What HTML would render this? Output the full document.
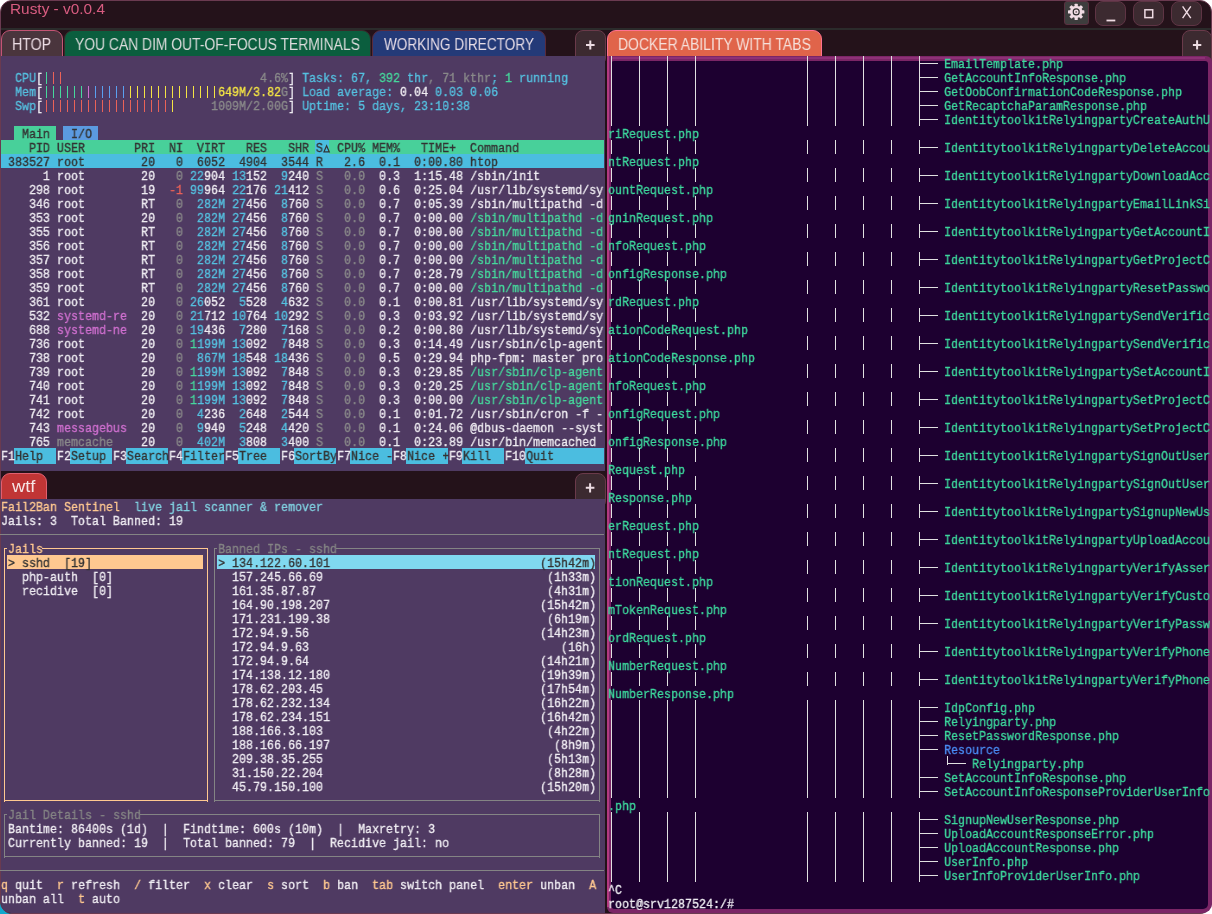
<!DOCTYPE html>
<html><head><meta charset="utf-8"><style>
html,body{margin:0;padding:0;width:1212px;height:914px;overflow:hidden;background:#ffffff;}
#win{position:absolute;left:0;top:0;width:1212px;height:914px;overflow:hidden;}
.t{position:absolute;height:14px;line-height:14px;font-family:"Liberation Mono",monospace;font-size:13.5px;white-space:pre;transform:scaleX(0.86407);-webkit-text-stroke:0.35px currentColor;will-change:transform;transform-origin:0 0;}
.ui{position:absolute;font-family:"Liberation Sans",sans-serif;white-space:pre;}
.lab{position:absolute;font-family:"Liberation Sans",sans-serif;font-size:16px;line-height:16px;white-space:pre;transform-origin:0 0;will-change:transform;}
.btn{position:absolute;box-sizing:border-box;background:#3c2a30;border:1px solid #6a3a4a;border-radius:8px;color:#eee0e6;font-family:"Liberation Sans",sans-serif;text-align:center;}
</style></head><body>
<div id="win">
<!-- desktop bits -->
<div style="position:absolute;left:0;top:880px;width:30px;height:34px;background:#10a8cc;"></div>
<!-- window frame -->
<div style="position:absolute;left:0;top:0;width:1212px;height:914px;box-sizing:border-box;background:#24121a;border:1px solid #6a3a50;border-radius:12px;"></div>
<div class="ui" style="left:9.7px;top:1px;font-size:15px;line-height:15px;color:#d85c80;transform:scaleX(1.026);transform-origin:0 0;will-change:transform;">Rusty - v0.0.4</div>
<div class="btn" style="left:1064px;top:1px;width:25px;height:24px;background:#3d3d3d;border-radius:3px;border-color:#5a3040;"></div>
<div class="btn" style="left:1095px;top:1px;width:31px;height:25px;border-color:#5e3444;"></div>
<div class="btn" style="left:1133px;top:1px;width:31px;height:25px;border-color:#5e3444;"></div>
<div class="btn" style="left:1171px;top:1px;width:31px;height:25px;border-color:#5e3444;"></div>
<div style="position:absolute;left:1px;top:28px;width:1210px;height:2px;background:#2b2b2b;"></div>
<!-- left tabs -->
<div class="btn" style="left:1px;top:30px;width:62px;height:36px;background:#4a353d;border:1.6px solid #c45474;border-radius:9px;"></div>
<div class="btn" style="left:64px;top:30px;width:307px;height:36px;background:#0b5e3e;border:1px solid #3a2a2a;border-radius:9px;"></div>
<div class="btn" style="left:372px;top:30px;width:174px;height:36px;background:#243a78;border:1px solid #5a2a3a;border-radius:9px;"></div>
<div class="btn" style="left:575px;top:30px;width:31px;height:36px;"></div>
<div class="btn" style="left:607px;top:30px;width:215px;height:36px;background:#e0644a;border:1px solid #ff7090;border-radius:9px;"></div>
<div class="btn" style="left:1182px;top:30px;width:29.5px;height:36px;"></div>
<svg style="position:absolute;left:0;top:0" width="1212" height="60" viewBox="0 0 1212 60">
 <g transform="translate(1076.2 11.9)" fill="#f0dce4">
  <circle r="6.2"/>
  <g id="tooth"><rect x="-1.6" y="-8.2" width="3.2" height="4" rx="0.6"/></g>
  <use href="#tooth" transform="rotate(45)"/><use href="#tooth" transform="rotate(90)"/><use href="#tooth" transform="rotate(135)"/>
  <use href="#tooth" transform="rotate(180)"/><use href="#tooth" transform="rotate(225)"/><use href="#tooth" transform="rotate(270)"/><use href="#tooth" transform="rotate(315)"/>
  <circle r="3" fill="none" stroke="#2a2a2a" stroke-width="1.1"/>
  <circle r="0.9" fill="#7a6a70"/>
 </g>
 <rect x="1106.5" y="19.6" width="8.8" height="1.8" fill="#f0dce4"/>
 <rect x="1144.9" y="9.8" width="7.8" height="7.8" fill="none" stroke="#f0dce4" stroke-width="1.5"/>
 <path d="M1182.6 6.3 L1190.8 18.2 M1190.8 6.3 L1182.6 18.2" stroke="#f0dce4" stroke-width="1.4" fill="none"/>
 <path d="M586 45 H594.6 M590.3 40.4 V49.6" stroke="#ecdce2" stroke-width="2" fill="none"/>
 <path d="M1192.9 44.9 H1201.3 M1197.1 40.3 V49.5" stroke="#ecdce2" stroke-width="2" fill="none"/>
</svg>
<div class="lab" style="left:11.8px;top:37px;color:#ecdce4;transform:scaleX(0.886)">HTOP</div>
<div class="lab" style="left:75.2px;top:37px;color:#dcdcdc;transform:scaleX(0.867)">YOU CAN DIM OUT-OF-FOCUS TERMINALS</div>
<div class="lab" style="left:384.4px;top:37px;color:#e6dce6;transform:scaleX(0.85)">WORKING DIRECTORY</div>
<div class="lab" style="left:618.2px;top:37px;color:#f6e0da;transform:scaleX(0.871)">DOCKER ABILITY WITH TABS</div>
<!-- htop pane -->
<div style="position:absolute;left:1px;top:56px;width:604px;height:415px;background:#4f3a62;"></div>
<!-- wtf tabs -->
<div class="btn" style="left:1px;top:473px;width:46px;height:36px;background:#c03535;border:1px solid #e06070;border-radius:9px;"></div>
<div class="btn" style="left:575px;top:473px;width:31px;height:36px;"></div>
<svg style="position:absolute;left:575px;top:473px" width="32" height="26"><path d="M10.8 14.8 H19.4 M15.1 10.2 V19.4" stroke="#ecdce2" stroke-width="2" fill="none"/></svg>
<div class="lab" style="left:11.9px;top:479px;color:#f6e6e6;transform:scaleX(1.143)">wtf</div>
<div style="position:absolute;left:1px;top:499px;width:604px;height:414px;background:#4f3a62;border-bottom-left-radius:10px;"></div>
<!-- right pane -->
<div style="position:absolute;left:607px;top:56px;width:605px;height:857px;box-sizing:border-box;background:#7b2566;border-radius:0 6px 9px 6px;"></div>
<div style="position:absolute;left:611px;top:60.5px;width:597px;height:848.5px;background:#1d0030;border-radius:3px 3px 5px 4px;"></div>
<div style="position:absolute;left:607px;top:56px;width:1.6px;height:851px;background:#c2408a;opacity:0.8;"></div>
<div style="position:absolute;left:611px;top:57px;width:594px;height:1.5px;background:#9a3a80;opacity:0.6;"></div>
<div style="position:absolute;left:45.9px;top:72.3px;width:1.4px;height:11.6px;background:#46d89c;"></div>
<div style="position:absolute;left:52.9px;top:72.3px;width:1.4px;height:11.6px;background:#ea6258;"></div>
<div style="position:absolute;left:59.9px;top:72.3px;width:1.4px;height:11.6px;background:#ea6258;"></div>
<div class="t" style="left:1px;top:72px"><span style="color:#55c0e0">  CPU</span><span style="color:#efecf2">[</span>                               <span style="color:#8a8a8a">4.6%</span><span style="color:#efecf2">]</span><span style="color:#55c0e0"> Tasks: 67, </span><span style="color:#46d89c">392</span><span style="color:#55c0e0"> thr</span><span style="color:#8a8a8a">, 71 kthr</span><span style="color:#55c0e0">; </span><span style="color:#46d89c">1</span><span style="color:#55c0e0"> running</span></div>
<div style="position:absolute;left:45.9px;top:86.3px;width:1.4px;height:11.6px;background:#46d89c;"></div>
<div style="position:absolute;left:52.9px;top:86.3px;width:1.4px;height:11.6px;background:#46d89c;"></div>
<div style="position:absolute;left:59.9px;top:86.3px;width:1.4px;height:11.6px;background:#46d89c;"></div>
<div style="position:absolute;left:66.9px;top:86.3px;width:1.4px;height:11.6px;background:#46d89c;"></div>
<div style="position:absolute;left:73.9px;top:86.3px;width:1.4px;height:11.6px;background:#46d89c;"></div>
<div style="position:absolute;left:80.9px;top:86.3px;width:1.4px;height:11.6px;background:#46d89c;"></div>
<div style="position:absolute;left:87.9px;top:86.3px;width:1.4px;height:11.6px;background:#d070d0;"></div>
<div style="position:absolute;left:94.9px;top:86.3px;width:1.4px;height:11.6px;background:#5aa0f0;"></div>
<div style="position:absolute;left:101.9px;top:86.3px;width:1.4px;height:11.6px;background:#5aa0f0;"></div>
<div style="position:absolute;left:108.9px;top:86.3px;width:1.4px;height:11.6px;background:#5aa0f0;"></div>
<div style="position:absolute;left:115.9px;top:86.3px;width:1.4px;height:11.6px;background:#5aa0f0;"></div>
<div style="position:absolute;left:122.9px;top:86.3px;width:1.4px;height:11.6px;background:#5aa0f0;"></div>
<div style="position:absolute;left:129.9px;top:86.3px;width:1.4px;height:11.6px;background:#f4e444;"></div>
<div style="position:absolute;left:136.9px;top:86.3px;width:1.4px;height:11.6px;background:#f4e444;"></div>
<div style="position:absolute;left:143.9px;top:86.3px;width:1.4px;height:11.6px;background:#f4e444;"></div>
<div style="position:absolute;left:150.9px;top:86.3px;width:1.4px;height:11.6px;background:#f4e444;"></div>
<div style="position:absolute;left:157.9px;top:86.3px;width:1.4px;height:11.6px;background:#f4e444;"></div>
<div style="position:absolute;left:164.9px;top:86.3px;width:1.4px;height:11.6px;background:#f4e444;"></div>
<div style="position:absolute;left:171.9px;top:86.3px;width:1.4px;height:11.6px;background:#f4e444;"></div>
<div style="position:absolute;left:178.9px;top:86.3px;width:1.4px;height:11.6px;background:#f4e444;"></div>
<div style="position:absolute;left:185.9px;top:86.3px;width:1.4px;height:11.6px;background:#f4e444;"></div>
<div style="position:absolute;left:192.9px;top:86.3px;width:1.4px;height:11.6px;background:#f4e444;"></div>
<div style="position:absolute;left:199.9px;top:86.3px;width:1.4px;height:11.6px;background:#f4e444;"></div>
<div style="position:absolute;left:206.9px;top:86.3px;width:1.4px;height:11.6px;background:#f4e444;"></div>
<div style="position:absolute;left:213.9px;top:86.3px;width:1.4px;height:11.6px;background:#f4e444;"></div>
<div class="t" style="left:1px;top:86px"><span style="color:#55c0e0">  Mem</span><span style="color:#efecf2">[</span>                         <span style="color:#f4e444">649M/3.82</span><span style="color:#8a8a8a">G</span><span style="color:#efecf2">]</span><span style="color:#55c0e0"> Load average: </span><span style="color:#efecf2">0.04</span><span style="color:#55c0e0"> 0.03 0.06</span></div>
<div style="position:absolute;left:45.9px;top:100.3px;width:1.4px;height:11.6px;background:#ea6258;"></div>
<div style="position:absolute;left:52.9px;top:100.3px;width:1.4px;height:11.6px;background:#ea6258;"></div>
<div style="position:absolute;left:59.9px;top:100.3px;width:1.4px;height:11.6px;background:#ea6258;"></div>
<div style="position:absolute;left:66.9px;top:100.3px;width:1.4px;height:11.6px;background:#ea6258;"></div>
<div style="position:absolute;left:73.9px;top:100.3px;width:1.4px;height:11.6px;background:#ea6258;"></div>
<div style="position:absolute;left:80.9px;top:100.3px;width:1.4px;height:11.6px;background:#ea6258;"></div>
<div style="position:absolute;left:87.9px;top:100.3px;width:1.4px;height:11.6px;background:#ea6258;"></div>
<div style="position:absolute;left:94.9px;top:100.3px;width:1.4px;height:11.6px;background:#ea6258;"></div>
<div style="position:absolute;left:101.9px;top:100.3px;width:1.4px;height:11.6px;background:#ea6258;"></div>
<div style="position:absolute;left:108.9px;top:100.3px;width:1.4px;height:11.6px;background:#ea6258;"></div>
<div style="position:absolute;left:115.9px;top:100.3px;width:1.4px;height:11.6px;background:#ea6258;"></div>
<div style="position:absolute;left:122.9px;top:100.3px;width:1.4px;height:11.6px;background:#ea6258;"></div>
<div style="position:absolute;left:129.9px;top:100.3px;width:1.4px;height:11.6px;background:#ea6258;"></div>
<div style="position:absolute;left:136.9px;top:100.3px;width:1.4px;height:11.6px;background:#ea6258;"></div>
<div style="position:absolute;left:143.9px;top:100.3px;width:1.4px;height:11.6px;background:#ea6258;"></div>
<div style="position:absolute;left:150.9px;top:100.3px;width:1.4px;height:11.6px;background:#ea6258;"></div>
<div style="position:absolute;left:157.9px;top:100.3px;width:1.4px;height:11.6px;background:#ea6258;"></div>
<div style="position:absolute;left:164.9px;top:100.3px;width:1.4px;height:11.6px;background:#ea6258;"></div>
<div style="position:absolute;left:171.9px;top:100.3px;width:1.4px;height:11.6px;background:#f4e444;"></div>
<div class="t" style="left:1px;top:100px"><span style="color:#55c0e0">  Swp</span><span style="color:#efecf2">[</span>                        <span style="color:#8a8a8a">1009M/2.00G</span><span style="color:#efecf2">]</span><span style="color:#55c0e0"> Uptime: 5 days, 23:10:38</span></div>
<div style="position:absolute;left:14.0px;top:126px;width:42.0px;height:14px;background:#48d09a;"></div>
<div style="position:absolute;left:63.0px;top:126px;width:35.0px;height:14px;background:#5b9ae0;"></div>
<div class="t" style="left:1px;top:128px"><span style="color:#333333">   Main   </span><span style="color:#333333">I/O</span></div>
<div style="position:absolute;left:1px;top:140px;width:603px;height:14px;background:#48d09a;"></div>
<div style="position:absolute;left:315.0px;top:140px;width:14.0px;height:14px;background:#4bbde0;"></div>
<div class="t" style="left:1px;top:142px"><span style="color:#333333">    PID USER       PRI  NI  VIRT   RES   SHR S</span> <span style="color:#333333"> CPU% MEM%   TIME+  Command</span></div>
<svg style="position:absolute;left:0;top:0" width="340" height="160"><path d="M323.9 151.9 L329.3 151.9 L326.6 145.7 Z" fill="none" stroke="#333" stroke-width="1.15" stroke-linejoin="miter"/></svg>
<div style="position:absolute;left:1px;top:154px;width:603px;height:14px;background:#4bbde0;"></div>
<div class="t" style="left:1px;top:156px"><span style="color:#333333"> 383527 root        20   0  6052  4904  3544 R   2.6  0.1  0:00.80 htop</span></div>
<div class="t" style="left:1px;top:170px"><span style="color:#efecf2">      1 </span><span style="color:#efecf2">root       </span><span style="color:#efecf2"> 20 </span><span style="color:#8a8a8a">  0</span> <span style="color:#55c0e0">22</span><span style="color:#efecf2">904</span> <span style="color:#55c0e0">13</span><span style="color:#efecf2">152</span>  <span style="color:#55c0e0">9</span><span style="color:#efecf2">240</span> <span style="color:#8a8a8a">S</span>   <span style="color:#8a8a8a">0.0</span> <span style="color:#efecf2"> 0.3 </span><span style="color:#efecf2"> 1:15.48 </span><span style="color:#efecf2">/sbin/init</span></div>
<div class="t" style="left:1px;top:184px"><span style="color:#efecf2">    298 </span><span style="color:#efecf2">root       </span><span style="color:#efecf2"> 19 </span><span style="color:#ea6258"> -1</span> <span style="color:#55c0e0">99</span><span style="color:#efecf2">964</span> <span style="color:#55c0e0">22</span><span style="color:#efecf2">176</span> <span style="color:#55c0e0">21</span><span style="color:#efecf2">412</span> <span style="color:#8a8a8a">S</span>   <span style="color:#8a8a8a">0.0</span> <span style="color:#efecf2"> 0.6 </span><span style="color:#efecf2"> 0:25.04 </span><span style="color:#efecf2">/usr/lib/systemd/sy</span></div>
<div class="t" style="left:1px;top:198px"><span style="color:#efecf2">    346 </span><span style="color:#efecf2">root       </span><span style="color:#efecf2"> RT </span><span style="color:#8a8a8a">  0</span>  <span style="color:#55c0e0">282M</span> <span style="color:#55c0e0">27</span><span style="color:#efecf2">456</span>  <span style="color:#55c0e0">8</span><span style="color:#efecf2">760</span> <span style="color:#8a8a8a">S</span>   <span style="color:#8a8a8a">0.0</span> <span style="color:#efecf2"> 0.7 </span><span style="color:#efecf2"> 0:05.39 </span><span style="color:#efecf2">/sbin/multipathd -d</span></div>
<div class="t" style="left:1px;top:212px"><span style="color:#efecf2">    353 </span><span style="color:#efecf2">root       </span><span style="color:#efecf2"> 20 </span><span style="color:#8a8a8a">  0</span>  <span style="color:#55c0e0">282M</span> <span style="color:#55c0e0">27</span><span style="color:#efecf2">456</span>  <span style="color:#55c0e0">8</span><span style="color:#efecf2">760</span> <span style="color:#8a8a8a">S</span>   <span style="color:#8a8a8a">0.0</span> <span style="color:#efecf2"> 0.7 </span><span style="color:#efecf2"> 0:00.00 </span><span style="color:#46d89c">/sbin/multipathd -d</span></div>
<div class="t" style="left:1px;top:226px"><span style="color:#efecf2">    355 </span><span style="color:#efecf2">root       </span><span style="color:#efecf2"> RT </span><span style="color:#8a8a8a">  0</span>  <span style="color:#55c0e0">282M</span> <span style="color:#55c0e0">27</span><span style="color:#efecf2">456</span>  <span style="color:#55c0e0">8</span><span style="color:#efecf2">760</span> <span style="color:#8a8a8a">S</span>   <span style="color:#8a8a8a">0.0</span> <span style="color:#efecf2"> 0.7 </span><span style="color:#efecf2"> 0:00.00 </span><span style="color:#46d89c">/sbin/multipathd -d</span></div>
<div class="t" style="left:1px;top:240px"><span style="color:#efecf2">    356 </span><span style="color:#efecf2">root       </span><span style="color:#efecf2"> RT </span><span style="color:#8a8a8a">  0</span>  <span style="color:#55c0e0">282M</span> <span style="color:#55c0e0">27</span><span style="color:#efecf2">456</span>  <span style="color:#55c0e0">8</span><span style="color:#efecf2">760</span> <span style="color:#8a8a8a">S</span>   <span style="color:#8a8a8a">0.0</span> <span style="color:#efecf2"> 0.7 </span><span style="color:#efecf2"> 0:00.00 </span><span style="color:#46d89c">/sbin/multipathd -d</span></div>
<div class="t" style="left:1px;top:254px"><span style="color:#efecf2">    357 </span><span style="color:#efecf2">root       </span><span style="color:#efecf2"> RT </span><span style="color:#8a8a8a">  0</span>  <span style="color:#55c0e0">282M</span> <span style="color:#55c0e0">27</span><span style="color:#efecf2">456</span>  <span style="color:#55c0e0">8</span><span style="color:#efecf2">760</span> <span style="color:#8a8a8a">S</span>   <span style="color:#8a8a8a">0.0</span> <span style="color:#efecf2"> 0.7 </span><span style="color:#efecf2"> 0:00.00 </span><span style="color:#46d89c">/sbin/multipathd -d</span></div>
<div class="t" style="left:1px;top:268px"><span style="color:#efecf2">    358 </span><span style="color:#efecf2">root       </span><span style="color:#efecf2"> RT </span><span style="color:#8a8a8a">  0</span>  <span style="color:#55c0e0">282M</span> <span style="color:#55c0e0">27</span><span style="color:#efecf2">456</span>  <span style="color:#55c0e0">8</span><span style="color:#efecf2">760</span> <span style="color:#8a8a8a">S</span>   <span style="color:#8a8a8a">0.0</span> <span style="color:#efecf2"> 0.7 </span><span style="color:#efecf2"> 0:28.79 </span><span style="color:#46d89c">/sbin/multipathd -d</span></div>
<div class="t" style="left:1px;top:282px"><span style="color:#efecf2">    359 </span><span style="color:#efecf2">root       </span><span style="color:#efecf2"> RT </span><span style="color:#8a8a8a">  0</span>  <span style="color:#55c0e0">282M</span> <span style="color:#55c0e0">27</span><span style="color:#efecf2">456</span>  <span style="color:#55c0e0">8</span><span style="color:#efecf2">760</span> <span style="color:#8a8a8a">S</span>   <span style="color:#8a8a8a">0.0</span> <span style="color:#efecf2"> 0.7 </span><span style="color:#efecf2"> 0:00.00 </span><span style="color:#46d89c">/sbin/multipathd -d</span></div>
<div class="t" style="left:1px;top:296px"><span style="color:#efecf2">    361 </span><span style="color:#efecf2">root       </span><span style="color:#efecf2"> 20 </span><span style="color:#8a8a8a">  0</span> <span style="color:#55c0e0">26</span><span style="color:#efecf2">052</span>  <span style="color:#55c0e0">5</span><span style="color:#efecf2">528</span>  <span style="color:#55c0e0">4</span><span style="color:#efecf2">632</span> <span style="color:#8a8a8a">S</span>   <span style="color:#8a8a8a">0.0</span> <span style="color:#efecf2"> 0.1 </span><span style="color:#efecf2"> 0:00.81 </span><span style="color:#efecf2">/usr/lib/systemd/sy</span></div>
<div class="t" style="left:1px;top:310px"><span style="color:#efecf2">    532 </span><span style="color:#d070d0">systemd-re </span><span style="color:#efecf2"> 20 </span><span style="color:#8a8a8a">  0</span> <span style="color:#55c0e0">21</span><span style="color:#efecf2">712</span> <span style="color:#55c0e0">10</span><span style="color:#efecf2">764</span> <span style="color:#55c0e0">10</span><span style="color:#efecf2">292</span> <span style="color:#8a8a8a">S</span>   <span style="color:#8a8a8a">0.0</span> <span style="color:#efecf2"> 0.3 </span><span style="color:#efecf2"> 0:03.92 </span><span style="color:#efecf2">/usr/lib/systemd/sy</span></div>
<div class="t" style="left:1px;top:324px"><span style="color:#efecf2">    688 </span><span style="color:#d070d0">systemd-ne </span><span style="color:#efecf2"> 20 </span><span style="color:#8a8a8a">  0</span> <span style="color:#55c0e0">19</span><span style="color:#efecf2">436</span>  <span style="color:#55c0e0">7</span><span style="color:#efecf2">280</span>  <span style="color:#55c0e0">7</span><span style="color:#efecf2">168</span> <span style="color:#8a8a8a">S</span>   <span style="color:#8a8a8a">0.0</span> <span style="color:#efecf2"> 0.2 </span><span style="color:#efecf2"> 0:00.80 </span><span style="color:#efecf2">/usr/lib/systemd/sy</span></div>
<div class="t" style="left:1px;top:338px"><span style="color:#efecf2">    736 </span><span style="color:#efecf2">root       </span><span style="color:#efecf2"> 20 </span><span style="color:#8a8a8a">  0</span> <span style="color:#46d89c">1</span><span style="color:#55c0e0">199M</span> <span style="color:#55c0e0">13</span><span style="color:#efecf2">092</span>  <span style="color:#55c0e0">7</span><span style="color:#efecf2">848</span> <span style="color:#8a8a8a">S</span>   <span style="color:#8a8a8a">0.0</span> <span style="color:#efecf2"> 0.3 </span><span style="color:#efecf2"> 0:14.49 </span><span style="color:#efecf2">/usr/sbin/clp-agent</span></div>
<div class="t" style="left:1px;top:352px"><span style="color:#efecf2">    738 </span><span style="color:#efecf2">root       </span><span style="color:#efecf2"> 20 </span><span style="color:#8a8a8a">  0</span>  <span style="color:#55c0e0">867M</span> <span style="color:#55c0e0">18</span><span style="color:#efecf2">548</span> <span style="color:#55c0e0">18</span><span style="color:#efecf2">436</span> <span style="color:#8a8a8a">S</span>   <span style="color:#8a8a8a">0.0</span> <span style="color:#efecf2"> 0.5 </span><span style="color:#efecf2"> 0:29.94 </span><span style="color:#efecf2">php-fpm: master pro</span></div>
<div class="t" style="left:1px;top:366px"><span style="color:#efecf2">    739 </span><span style="color:#efecf2">root       </span><span style="color:#efecf2"> 20 </span><span style="color:#8a8a8a">  0</span> <span style="color:#46d89c">1</span><span style="color:#55c0e0">199M</span> <span style="color:#55c0e0">13</span><span style="color:#efecf2">092</span>  <span style="color:#55c0e0">7</span><span style="color:#efecf2">848</span> <span style="color:#8a8a8a">S</span>   <span style="color:#8a8a8a">0.0</span> <span style="color:#efecf2"> 0.3 </span><span style="color:#efecf2"> 0:29.85 </span><span style="color:#46d89c">/usr/sbin/clp-agent</span></div>
<div class="t" style="left:1px;top:380px"><span style="color:#efecf2">    740 </span><span style="color:#efecf2">root       </span><span style="color:#efecf2"> 20 </span><span style="color:#8a8a8a">  0</span> <span style="color:#46d89c">1</span><span style="color:#55c0e0">199M</span> <span style="color:#55c0e0">13</span><span style="color:#efecf2">092</span>  <span style="color:#55c0e0">7</span><span style="color:#efecf2">848</span> <span style="color:#8a8a8a">S</span>   <span style="color:#8a8a8a">0.0</span> <span style="color:#efecf2"> 0.3 </span><span style="color:#efecf2"> 0:20.25 </span><span style="color:#46d89c">/usr/sbin/clp-agent</span></div>
<div class="t" style="left:1px;top:394px"><span style="color:#efecf2">    741 </span><span style="color:#efecf2">root       </span><span style="color:#efecf2"> 20 </span><span style="color:#8a8a8a">  0</span> <span style="color:#46d89c">1</span><span style="color:#55c0e0">199M</span> <span style="color:#55c0e0">13</span><span style="color:#efecf2">092</span>  <span style="color:#55c0e0">7</span><span style="color:#efecf2">848</span> <span style="color:#8a8a8a">S</span>   <span style="color:#8a8a8a">0.0</span> <span style="color:#efecf2"> 0.3 </span><span style="color:#efecf2"> 0:00.00 </span><span style="color:#46d89c">/usr/sbin/clp-agent</span></div>
<div class="t" style="left:1px;top:408px"><span style="color:#efecf2">    742 </span><span style="color:#efecf2">root       </span><span style="color:#efecf2"> 20 </span><span style="color:#8a8a8a">  0</span>  <span style="color:#55c0e0">4</span><span style="color:#efecf2">236</span>  <span style="color:#55c0e0">2</span><span style="color:#efecf2">648</span>  <span style="color:#55c0e0">2</span><span style="color:#efecf2">544</span> <span style="color:#8a8a8a">S</span>   <span style="color:#8a8a8a">0.0</span> <span style="color:#efecf2"> 0.1 </span><span style="color:#efecf2"> 0:01.72 </span><span style="color:#efecf2">/usr/sbin/cron -f -</span></div>
<div class="t" style="left:1px;top:422px"><span style="color:#efecf2">    743 </span><span style="color:#d070d0">messagebus </span><span style="color:#efecf2"> 20 </span><span style="color:#8a8a8a">  0</span>  <span style="color:#55c0e0">9</span><span style="color:#efecf2">940</span>  <span style="color:#55c0e0">5</span><span style="color:#efecf2">248</span>  <span style="color:#55c0e0">4</span><span style="color:#efecf2">420</span> <span style="color:#8a8a8a">S</span>   <span style="color:#8a8a8a">0.0</span> <span style="color:#efecf2"> 0.1 </span><span style="color:#efecf2"> 0:24.06 </span><span style="color:#efecf2">@dbus-daemon --syst</span></div>
<div class="t" style="left:1px;top:436px"><span style="color:#efecf2">    765 </span><span style="color:#8a8a8a">memcache   </span><span style="color:#efecf2"> 20 </span><span style="color:#8a8a8a">  0</span>  <span style="color:#55c0e0">402M</span>  <span style="color:#55c0e0">3</span><span style="color:#efecf2">808</span>  <span style="color:#55c0e0">3</span><span style="color:#efecf2">400</span> <span style="color:#8a8a8a">S</span>   <span style="color:#8a8a8a">0.0</span> <span style="color:#efecf2"> 0.1 </span><span style="color:#efecf2"> 0:23.89 </span><span style="color:#efecf2">/usr/bin/memcached</span></div>
<div style="position:absolute;left:14.0px;top:448px;width:42.0px;height:16px;background:#4bbde0;"></div>
<div style="position:absolute;left:70.0px;top:448px;width:42.0px;height:16px;background:#4bbde0;"></div>
<div style="position:absolute;left:126.0px;top:448px;width:42.0px;height:16px;background:#4bbde0;"></div>
<div style="position:absolute;left:182.0px;top:448px;width:42.0px;height:16px;background:#4bbde0;"></div>
<div style="position:absolute;left:238.0px;top:448px;width:42.0px;height:16px;background:#4bbde0;"></div>
<div style="position:absolute;left:294.0px;top:448px;width:42.0px;height:16px;background:#4bbde0;"></div>
<div style="position:absolute;left:350.0px;top:448px;width:42.0px;height:16px;background:#4bbde0;"></div>
<div style="position:absolute;left:406.0px;top:448px;width:42.0px;height:16px;background:#4bbde0;"></div>
<div style="position:absolute;left:462.0px;top:448px;width:42.0px;height:16px;background:#4bbde0;"></div>
<div style="position:absolute;left:525.0px;top:448px;width:79.0px;height:16px;background:#4bbde0;"></div>
<div class="t" style="left:1px;top:450px"><span style="color:#efecf2">F1</span><span style="color:#333333">Help  </span><span style="color:#efecf2">F2</span><span style="color:#333333">Setup </span><span style="color:#efecf2">F3</span><span style="color:#333333">Search</span><span style="color:#efecf2">F4</span><span style="color:#333333">Filter</span><span style="color:#efecf2">F5</span><span style="color:#333333">Tree  </span><span style="color:#efecf2">F6</span><span style="color:#333333">SortBy</span><span style="color:#efecf2">F7</span><span style="color:#333333">Nice -</span><span style="color:#efecf2">F8</span><span style="color:#333333">Nice +</span><span style="color:#efecf2">F9</span><span style="color:#333333">Kill  </span><span style="color:#efecf2">F10</span><span style="color:#333333">Quit</span></div>
<div class="t" style="left:1px;top:501px"><span style="color:#ffc890">Fail2Ban Sentinel</span><span style="color:#80d0e0">  live jail scanner &amp; remover</span></div>
<div class="t" style="left:1px;top:515px"><span style="color:#efecf2">Jails: 3  Total Banned: 19</span></div>
<div style="position:absolute;left:0.0px;top:534.1px;width:603.5px;height:1.4px;background:#848484;"></div>
<div style="position:absolute;left:3.85px;top:548.1px;width:3.15px;height:1.4px;background:#ffc890;"></div>
<div style="position:absolute;left:3.85px;top:548.1px;width:1.35px;height:6.899999999999977px;background:#ffc890;"></div>
<div style="position:absolute;left:42.0px;top:548.1px;width:162.5px;height:1.4px;background:#ffc890;"></div>
<div style="position:absolute;left:203.0px;top:548.1px;width:5.199999999999989px;height:1.4px;background:#ffc890;"></div>
<div style="position:absolute;left:206.85px;top:548.1px;width:1.35px;height:6.899999999999977px;background:#ffc890;"></div>
<div style="position:absolute;left:213.85px;top:548.1px;width:3.1500000000000057px;height:1.4px;background:#848484;"></div>
<div style="position:absolute;left:213.85px;top:548.1px;width:1.35px;height:6.899999999999977px;background:#848484;"></div>
<div style="position:absolute;left:336.0px;top:548.1px;width:260.5px;height:1.4px;background:#848484;"></div>
<div style="position:absolute;left:595.0px;top:548.1px;width:5.2000000000000455px;height:1.4px;background:#848484;"></div>
<div style="position:absolute;left:598.85px;top:548.1px;width:1.35px;height:6.899999999999977px;background:#848484;"></div>
<div class="t" style="left:1px;top:543px"> <span style="color:#ffc890">Jails</span>                         <span style="color:#848484">Banned IPs - sshd</span>                                      </div>
<div style="position:absolute;left:7.0px;top:555px;width:196.0px;height:14px;background:#ffc890;"></div>
<div style="position:absolute;left:217.0px;top:555px;width:378.0px;height:14px;background:#80d8f0;"></div>
<div style="position:absolute;left:3.85px;top:555px;width:1.35px;height:14px;background:#ffc890;"></div>
<div style="position:absolute;left:206.85px;top:555px;width:1.35px;height:14px;background:#ffc890;"></div>
<div style="position:absolute;left:213.85px;top:555px;width:1.35px;height:14px;background:#848484;"></div>
<div style="position:absolute;left:598.85px;top:555px;width:1.35px;height:14px;background:#848484;"></div>
<div class="t" style="left:1px;top:557px"> <span style="color:#333333">&gt; sshd  [19]                </span>  <span style="color:#333333">&gt; 134.122.60.101                              (15h42m)</span> </div>
<div style="position:absolute;left:3.85px;top:569px;width:1.35px;height:14px;background:#ffc890;"></div>
<div style="position:absolute;left:206.85px;top:569px;width:1.35px;height:14px;background:#ffc890;"></div>
<div style="position:absolute;left:213.85px;top:569px;width:1.35px;height:14px;background:#848484;"></div>
<div style="position:absolute;left:598.85px;top:569px;width:1.35px;height:14px;background:#848484;"></div>
<div class="t" style="left:1px;top:571px"> <span style="color:#efecf2">  php-auth  [0]             </span>  <span style="color:#efecf2">  157.245.66.69                                (1h33m)</span> </div>
<div style="position:absolute;left:3.85px;top:583px;width:1.35px;height:14px;background:#ffc890;"></div>
<div style="position:absolute;left:206.85px;top:583px;width:1.35px;height:14px;background:#ffc890;"></div>
<div style="position:absolute;left:213.85px;top:583px;width:1.35px;height:14px;background:#848484;"></div>
<div style="position:absolute;left:598.85px;top:583px;width:1.35px;height:14px;background:#848484;"></div>
<div class="t" style="left:1px;top:585px"> <span style="color:#efecf2">  recidive  [0]             </span>  <span style="color:#efecf2">  161.35.87.87                                 (4h31m)</span> </div>
<div style="position:absolute;left:3.85px;top:597px;width:1.35px;height:14px;background:#ffc890;"></div>
<div style="position:absolute;left:206.85px;top:597px;width:1.35px;height:14px;background:#ffc890;"></div>
<div style="position:absolute;left:213.85px;top:597px;width:1.35px;height:14px;background:#848484;"></div>
<div style="position:absolute;left:598.85px;top:597px;width:1.35px;height:14px;background:#848484;"></div>
<div class="t" style="left:1px;top:599px">                               <span style="color:#efecf2">  164.90.198.207                              (15h42m)</span> </div>
<div style="position:absolute;left:3.85px;top:611px;width:1.35px;height:14px;background:#ffc890;"></div>
<div style="position:absolute;left:206.85px;top:611px;width:1.35px;height:14px;background:#ffc890;"></div>
<div style="position:absolute;left:213.85px;top:611px;width:1.35px;height:14px;background:#848484;"></div>
<div style="position:absolute;left:598.85px;top:611px;width:1.35px;height:14px;background:#848484;"></div>
<div class="t" style="left:1px;top:613px">                               <span style="color:#efecf2">  171.231.199.38                               (6h19m)</span> </div>
<div style="position:absolute;left:3.85px;top:625px;width:1.35px;height:14px;background:#ffc890;"></div>
<div style="position:absolute;left:206.85px;top:625px;width:1.35px;height:14px;background:#ffc890;"></div>
<div style="position:absolute;left:213.85px;top:625px;width:1.35px;height:14px;background:#848484;"></div>
<div style="position:absolute;left:598.85px;top:625px;width:1.35px;height:14px;background:#848484;"></div>
<div class="t" style="left:1px;top:627px">                               <span style="color:#efecf2">  172.94.9.56                                 (14h23m)</span> </div>
<div style="position:absolute;left:3.85px;top:639px;width:1.35px;height:14px;background:#ffc890;"></div>
<div style="position:absolute;left:206.85px;top:639px;width:1.35px;height:14px;background:#ffc890;"></div>
<div style="position:absolute;left:213.85px;top:639px;width:1.35px;height:14px;background:#848484;"></div>
<div style="position:absolute;left:598.85px;top:639px;width:1.35px;height:14px;background:#848484;"></div>
<div class="t" style="left:1px;top:641px">                               <span style="color:#efecf2">  172.94.9.63                                    (16h)</span> </div>
<div style="position:absolute;left:3.85px;top:653px;width:1.35px;height:14px;background:#ffc890;"></div>
<div style="position:absolute;left:206.85px;top:653px;width:1.35px;height:14px;background:#ffc890;"></div>
<div style="position:absolute;left:213.85px;top:653px;width:1.35px;height:14px;background:#848484;"></div>
<div style="position:absolute;left:598.85px;top:653px;width:1.35px;height:14px;background:#848484;"></div>
<div class="t" style="left:1px;top:655px">                               <span style="color:#efecf2">  172.94.9.64                                 (14h21m)</span> </div>
<div style="position:absolute;left:3.85px;top:667px;width:1.35px;height:14px;background:#ffc890;"></div>
<div style="position:absolute;left:206.85px;top:667px;width:1.35px;height:14px;background:#ffc890;"></div>
<div style="position:absolute;left:213.85px;top:667px;width:1.35px;height:14px;background:#848484;"></div>
<div style="position:absolute;left:598.85px;top:667px;width:1.35px;height:14px;background:#848484;"></div>
<div class="t" style="left:1px;top:669px">                               <span style="color:#efecf2">  174.138.12.180                              (19h39m)</span> </div>
<div style="position:absolute;left:3.85px;top:681px;width:1.35px;height:14px;background:#ffc890;"></div>
<div style="position:absolute;left:206.85px;top:681px;width:1.35px;height:14px;background:#ffc890;"></div>
<div style="position:absolute;left:213.85px;top:681px;width:1.35px;height:14px;background:#848484;"></div>
<div style="position:absolute;left:598.85px;top:681px;width:1.35px;height:14px;background:#848484;"></div>
<div class="t" style="left:1px;top:683px">                               <span style="color:#efecf2">  178.62.203.45                               (17h54m)</span> </div>
<div style="position:absolute;left:3.85px;top:695px;width:1.35px;height:14px;background:#ffc890;"></div>
<div style="position:absolute;left:206.85px;top:695px;width:1.35px;height:14px;background:#ffc890;"></div>
<div style="position:absolute;left:213.85px;top:695px;width:1.35px;height:14px;background:#848484;"></div>
<div style="position:absolute;left:598.85px;top:695px;width:1.35px;height:14px;background:#848484;"></div>
<div class="t" style="left:1px;top:697px">                               <span style="color:#efecf2">  178.62.232.134                              (16h22m)</span> </div>
<div style="position:absolute;left:3.85px;top:709px;width:1.35px;height:14px;background:#ffc890;"></div>
<div style="position:absolute;left:206.85px;top:709px;width:1.35px;height:14px;background:#ffc890;"></div>
<div style="position:absolute;left:213.85px;top:709px;width:1.35px;height:14px;background:#848484;"></div>
<div style="position:absolute;left:598.85px;top:709px;width:1.35px;height:14px;background:#848484;"></div>
<div class="t" style="left:1px;top:711px">                               <span style="color:#efecf2">  178.62.234.151                              (16h42m)</span> </div>
<div style="position:absolute;left:3.85px;top:723px;width:1.35px;height:14px;background:#ffc890;"></div>
<div style="position:absolute;left:206.85px;top:723px;width:1.35px;height:14px;background:#ffc890;"></div>
<div style="position:absolute;left:213.85px;top:723px;width:1.35px;height:14px;background:#848484;"></div>
<div style="position:absolute;left:598.85px;top:723px;width:1.35px;height:14px;background:#848484;"></div>
<div class="t" style="left:1px;top:725px">                               <span style="color:#efecf2">  188.166.3.103                                (4h22m)</span> </div>
<div style="position:absolute;left:3.85px;top:737px;width:1.35px;height:14px;background:#ffc890;"></div>
<div style="position:absolute;left:206.85px;top:737px;width:1.35px;height:14px;background:#ffc890;"></div>
<div style="position:absolute;left:213.85px;top:737px;width:1.35px;height:14px;background:#848484;"></div>
<div style="position:absolute;left:598.85px;top:737px;width:1.35px;height:14px;background:#848484;"></div>
<div class="t" style="left:1px;top:739px">                               <span style="color:#efecf2">  188.166.66.197                                (8h9m)</span> </div>
<div style="position:absolute;left:3.85px;top:751px;width:1.35px;height:14px;background:#ffc890;"></div>
<div style="position:absolute;left:206.85px;top:751px;width:1.35px;height:14px;background:#ffc890;"></div>
<div style="position:absolute;left:213.85px;top:751px;width:1.35px;height:14px;background:#848484;"></div>
<div style="position:absolute;left:598.85px;top:751px;width:1.35px;height:14px;background:#848484;"></div>
<div class="t" style="left:1px;top:753px">                               <span style="color:#efecf2">  209.38.35.255                                (5h13m)</span> </div>
<div style="position:absolute;left:3.85px;top:765px;width:1.35px;height:14px;background:#ffc890;"></div>
<div style="position:absolute;left:206.85px;top:765px;width:1.35px;height:14px;background:#ffc890;"></div>
<div style="position:absolute;left:213.85px;top:765px;width:1.35px;height:14px;background:#848484;"></div>
<div style="position:absolute;left:598.85px;top:765px;width:1.35px;height:14px;background:#848484;"></div>
<div class="t" style="left:1px;top:767px">                               <span style="color:#efecf2">  31.150.22.204                                (8h28m)</span> </div>
<div style="position:absolute;left:3.85px;top:779px;width:1.35px;height:14px;background:#ffc890;"></div>
<div style="position:absolute;left:206.85px;top:779px;width:1.35px;height:14px;background:#ffc890;"></div>
<div style="position:absolute;left:213.85px;top:779px;width:1.35px;height:14px;background:#848484;"></div>
<div style="position:absolute;left:598.85px;top:779px;width:1.35px;height:14px;background:#848484;"></div>
<div class="t" style="left:1px;top:781px">                               <span style="color:#efecf2">  45.79.150.100                               (15h20m)</span> </div>
<div style="position:absolute;left:3.85px;top:793px;width:1.35px;height:8.5px;background:#ffc890;"></div>
<div style="position:absolute;left:5.2px;top:800.1px;width:1.7999999999999998px;height:1.4px;background:#ffc890;"></div>
<div style="position:absolute;left:7.0px;top:800.1px;width:196.0px;height:1.4px;background:#ffc890;"></div>
<div style="position:absolute;left:203.0px;top:800.1px;width:5.199999999999989px;height:1.4px;background:#ffc890;"></div>
<div style="position:absolute;left:206.85px;top:793px;width:1.35px;height:8.5px;background:#ffc890;"></div>
<div style="position:absolute;left:213.85px;top:793px;width:1.35px;height:8.5px;background:#848484;"></div>
<div style="position:absolute;left:215.2px;top:800.1px;width:1.8000000000000056px;height:1.4px;background:#848484;"></div>
<div style="position:absolute;left:217.0px;top:800.1px;width:378.0px;height:1.4px;background:#848484;"></div>
<div style="position:absolute;left:595.0px;top:800.1px;width:5.2000000000000455px;height:1.4px;background:#848484;"></div>
<div style="position:absolute;left:598.85px;top:793px;width:1.35px;height:8.5px;background:#848484;"></div>
<div style="position:absolute;left:3.85px;top:814.1px;width:3.15px;height:1.4px;background:#848484;"></div>
<div style="position:absolute;left:3.85px;top:814.1px;width:1.35px;height:6.899999999999977px;background:#848484;"></div>
<div style="position:absolute;left:140.0px;top:814.1px;width:456.5px;height:1.4px;background:#848484;"></div>
<div style="position:absolute;left:595.0px;top:814.1px;width:5.2000000000000455px;height:1.4px;background:#848484;"></div>
<div style="position:absolute;left:598.85px;top:814.1px;width:1.35px;height:6.899999999999977px;background:#848484;"></div>
<div class="t" style="left:1px;top:809px"> <span style="color:#848484">Jail Details - sshd</span>                                                                  </div>
<div style="position:absolute;left:3.85px;top:821px;width:1.35px;height:14px;background:#848484;"></div>
<div style="position:absolute;left:598.85px;top:821px;width:1.35px;height:14px;background:#848484;"></div>
<div class="t" style="left:1px;top:823px"> <span style="color:#efecf2">Bantime: 86400s (1d)  |  Findtime: 600s (10m)  |  Maxretry: 3                       </span> </div>
<div style="position:absolute;left:3.85px;top:835px;width:1.35px;height:14px;background:#848484;"></div>
<div style="position:absolute;left:598.85px;top:835px;width:1.35px;height:14px;background:#848484;"></div>
<div class="t" style="left:1px;top:837px"> <span style="color:#efecf2">Currently banned: 19  |  Total banned: 79  |  Recidive jail: no                     </span> </div>
<div style="position:absolute;left:3.85px;top:849px;width:1.35px;height:8.5px;background:#848484;"></div>
<div style="position:absolute;left:5.2px;top:856.1px;width:1.7999999999999998px;height:1.4px;background:#848484;"></div>
<div style="position:absolute;left:7.0px;top:856.1px;width:588.0px;height:1.4px;background:#848484;"></div>
<div style="position:absolute;left:595.0px;top:856.1px;width:5.2000000000000455px;height:1.4px;background:#848484;"></div>
<div style="position:absolute;left:598.85px;top:849px;width:1.35px;height:8.5px;background:#848484;"></div>
<div style="position:absolute;left:0.0px;top:870.1px;width:603.5px;height:1.4px;background:#848484;"></div>
<div class="t" style="left:1px;top:879px"><span style="color:#ffc890">q</span><span style="color:#efecf2"> quit  </span><span style="color:#ffc890">r</span><span style="color:#efecf2"> refresh  </span><span style="color:#ffc890">/</span><span style="color:#efecf2"> filter  </span><span style="color:#ffc890">x</span><span style="color:#efecf2"> clear  </span><span style="color:#ffc890">s</span><span style="color:#efecf2"> sort  </span><span style="color:#ffc890">b</span><span style="color:#efecf2"> ban  </span><span style="color:#ffc890">tab</span><span style="color:#efecf2"> switch panel  </span><span style="color:#ffc890">enter</span><span style="color:#efecf2"> unban  </span><span style="color:#ffc890">A</span></div>
<div class="t" style="left:1px;top:893px"><span style="color:#efecf2">unban all  </span><span style="color:#ffc890">t</span><span style="color:#efecf2"> auto</span></div>
<div style="position:absolute;left:610.85px;top:56px;width:1.35px;height:14px;background:#e0e0e0;"></div>
<div style="position:absolute;left:638.85px;top:56px;width:1.35px;height:14px;background:#e0e0e0;"></div>
<div style="position:absolute;left:666.85px;top:56px;width:1.35px;height:14px;background:#e0e0e0;"></div>
<div style="position:absolute;left:694.85px;top:56px;width:1.35px;height:14px;background:#e0e0e0;"></div>
<div style="position:absolute;left:806.85px;top:56px;width:1.35px;height:14px;background:#e0e0e0;"></div>
<div style="position:absolute;left:834.85px;top:56px;width:1.35px;height:14px;background:#e0e0e0;"></div>
<div style="position:absolute;left:862.85px;top:56px;width:1.35px;height:14px;background:#e0e0e0;"></div>
<div style="position:absolute;left:890.85px;top:56px;width:1.35px;height:14px;background:#e0e0e0;"></div>
<div style="position:absolute;left:918.85px;top:56px;width:1.35px;height:14px;background:#e0e0e0;"></div>
<div style="position:absolute;left:920.2px;top:63.1px;width:1.7999999999999772px;height:1.4px;background:#e0e0e0;"></div>
<div style="position:absolute;left:922.0px;top:63.1px;width:15.5px;height:1.4px;background:#e0e0e0;"></div>
<div class="t" style="left:608.3px;top:58px">                                                <span style="color:#3dd89d">EmailTemplate.php</span></div>
<div style="position:absolute;left:610.85px;top:70px;width:1.35px;height:14px;background:#e0e0e0;"></div>
<div style="position:absolute;left:638.85px;top:70px;width:1.35px;height:14px;background:#e0e0e0;"></div>
<div style="position:absolute;left:666.85px;top:70px;width:1.35px;height:14px;background:#e0e0e0;"></div>
<div style="position:absolute;left:694.85px;top:70px;width:1.35px;height:14px;background:#e0e0e0;"></div>
<div style="position:absolute;left:806.85px;top:70px;width:1.35px;height:14px;background:#e0e0e0;"></div>
<div style="position:absolute;left:834.85px;top:70px;width:1.35px;height:14px;background:#e0e0e0;"></div>
<div style="position:absolute;left:862.85px;top:70px;width:1.35px;height:14px;background:#e0e0e0;"></div>
<div style="position:absolute;left:890.85px;top:70px;width:1.35px;height:14px;background:#e0e0e0;"></div>
<div style="position:absolute;left:918.85px;top:70px;width:1.35px;height:14px;background:#e0e0e0;"></div>
<div style="position:absolute;left:920.2px;top:77.1px;width:1.7999999999999772px;height:1.4px;background:#e0e0e0;"></div>
<div style="position:absolute;left:922.0px;top:77.1px;width:15.5px;height:1.4px;background:#e0e0e0;"></div>
<div class="t" style="left:608.3px;top:72px">                                                <span style="color:#3dd89d">GetAccountInfoResponse.php</span></div>
<div style="position:absolute;left:610.85px;top:84px;width:1.35px;height:14px;background:#e0e0e0;"></div>
<div style="position:absolute;left:638.85px;top:84px;width:1.35px;height:14px;background:#e0e0e0;"></div>
<div style="position:absolute;left:666.85px;top:84px;width:1.35px;height:14px;background:#e0e0e0;"></div>
<div style="position:absolute;left:694.85px;top:84px;width:1.35px;height:14px;background:#e0e0e0;"></div>
<div style="position:absolute;left:806.85px;top:84px;width:1.35px;height:14px;background:#e0e0e0;"></div>
<div style="position:absolute;left:834.85px;top:84px;width:1.35px;height:14px;background:#e0e0e0;"></div>
<div style="position:absolute;left:862.85px;top:84px;width:1.35px;height:14px;background:#e0e0e0;"></div>
<div style="position:absolute;left:890.85px;top:84px;width:1.35px;height:14px;background:#e0e0e0;"></div>
<div style="position:absolute;left:918.85px;top:84px;width:1.35px;height:14px;background:#e0e0e0;"></div>
<div style="position:absolute;left:920.2px;top:91.1px;width:1.7999999999999772px;height:1.4px;background:#e0e0e0;"></div>
<div style="position:absolute;left:922.0px;top:91.1px;width:15.5px;height:1.4px;background:#e0e0e0;"></div>
<div class="t" style="left:608.3px;top:86px">                                                <span style="color:#3dd89d">GetOobConfirmationCodeResponse.php</span></div>
<div style="position:absolute;left:610.85px;top:98px;width:1.35px;height:14px;background:#e0e0e0;"></div>
<div style="position:absolute;left:638.85px;top:98px;width:1.35px;height:14px;background:#e0e0e0;"></div>
<div style="position:absolute;left:666.85px;top:98px;width:1.35px;height:14px;background:#e0e0e0;"></div>
<div style="position:absolute;left:694.85px;top:98px;width:1.35px;height:14px;background:#e0e0e0;"></div>
<div style="position:absolute;left:806.85px;top:98px;width:1.35px;height:14px;background:#e0e0e0;"></div>
<div style="position:absolute;left:834.85px;top:98px;width:1.35px;height:14px;background:#e0e0e0;"></div>
<div style="position:absolute;left:862.85px;top:98px;width:1.35px;height:14px;background:#e0e0e0;"></div>
<div style="position:absolute;left:890.85px;top:98px;width:1.35px;height:14px;background:#e0e0e0;"></div>
<div style="position:absolute;left:918.85px;top:98px;width:1.35px;height:14px;background:#e0e0e0;"></div>
<div style="position:absolute;left:920.2px;top:105.1px;width:1.7999999999999772px;height:1.4px;background:#e0e0e0;"></div>
<div style="position:absolute;left:922.0px;top:105.1px;width:15.5px;height:1.4px;background:#e0e0e0;"></div>
<div class="t" style="left:608.3px;top:100px">                                                <span style="color:#3dd89d">GetRecaptchaParamResponse.php</span></div>
<div style="position:absolute;left:610.85px;top:112px;width:1.35px;height:14px;background:#e0e0e0;"></div>
<div style="position:absolute;left:638.85px;top:112px;width:1.35px;height:14px;background:#e0e0e0;"></div>
<div style="position:absolute;left:666.85px;top:112px;width:1.35px;height:14px;background:#e0e0e0;"></div>
<div style="position:absolute;left:694.85px;top:112px;width:1.35px;height:14px;background:#e0e0e0;"></div>
<div style="position:absolute;left:806.85px;top:112px;width:1.35px;height:14px;background:#e0e0e0;"></div>
<div style="position:absolute;left:834.85px;top:112px;width:1.35px;height:14px;background:#e0e0e0;"></div>
<div style="position:absolute;left:862.85px;top:112px;width:1.35px;height:14px;background:#e0e0e0;"></div>
<div style="position:absolute;left:890.85px;top:112px;width:1.35px;height:14px;background:#e0e0e0;"></div>
<div style="position:absolute;left:918.85px;top:112px;width:1.35px;height:14px;background:#e0e0e0;"></div>
<div style="position:absolute;left:920.2px;top:119.1px;width:1.7999999999999772px;height:1.4px;background:#e0e0e0;"></div>
<div style="position:absolute;left:922.0px;top:119.1px;width:15.5px;height:1.4px;background:#e0e0e0;"></div>
<div class="t" style="left:608.3px;top:114px">                                                <span style="color:#3dd89d">IdentitytoolkitRelyingpartyCreateAuthU</span></div>
<div class="t" style="left:608.3px;top:128px"><span style="color:#3dd89d">riRequest.php</span></div>
<div style="position:absolute;left:610.85px;top:140px;width:1.35px;height:14px;background:#e0e0e0;"></div>
<div style="position:absolute;left:638.85px;top:140px;width:1.35px;height:14px;background:#e0e0e0;"></div>
<div style="position:absolute;left:666.85px;top:140px;width:1.35px;height:14px;background:#e0e0e0;"></div>
<div style="position:absolute;left:694.85px;top:140px;width:1.35px;height:14px;background:#e0e0e0;"></div>
<div style="position:absolute;left:806.85px;top:140px;width:1.35px;height:14px;background:#e0e0e0;"></div>
<div style="position:absolute;left:834.85px;top:140px;width:1.35px;height:14px;background:#e0e0e0;"></div>
<div style="position:absolute;left:862.85px;top:140px;width:1.35px;height:14px;background:#e0e0e0;"></div>
<div style="position:absolute;left:890.85px;top:140px;width:1.35px;height:14px;background:#e0e0e0;"></div>
<div style="position:absolute;left:918.85px;top:140px;width:1.35px;height:14px;background:#e0e0e0;"></div>
<div style="position:absolute;left:920.2px;top:147.1px;width:1.7999999999999772px;height:1.4px;background:#e0e0e0;"></div>
<div style="position:absolute;left:922.0px;top:147.1px;width:15.5px;height:1.4px;background:#e0e0e0;"></div>
<div class="t" style="left:608.3px;top:142px">                                                <span style="color:#3dd89d">IdentitytoolkitRelyingpartyDeleteAccou</span></div>
<div class="t" style="left:608.3px;top:156px"><span style="color:#3dd89d">ntRequest.php</span></div>
<div style="position:absolute;left:610.85px;top:168px;width:1.35px;height:14px;background:#e0e0e0;"></div>
<div style="position:absolute;left:638.85px;top:168px;width:1.35px;height:14px;background:#e0e0e0;"></div>
<div style="position:absolute;left:666.85px;top:168px;width:1.35px;height:14px;background:#e0e0e0;"></div>
<div style="position:absolute;left:694.85px;top:168px;width:1.35px;height:14px;background:#e0e0e0;"></div>
<div style="position:absolute;left:806.85px;top:168px;width:1.35px;height:14px;background:#e0e0e0;"></div>
<div style="position:absolute;left:834.85px;top:168px;width:1.35px;height:14px;background:#e0e0e0;"></div>
<div style="position:absolute;left:862.85px;top:168px;width:1.35px;height:14px;background:#e0e0e0;"></div>
<div style="position:absolute;left:890.85px;top:168px;width:1.35px;height:14px;background:#e0e0e0;"></div>
<div style="position:absolute;left:918.85px;top:168px;width:1.35px;height:14px;background:#e0e0e0;"></div>
<div style="position:absolute;left:920.2px;top:175.1px;width:1.7999999999999772px;height:1.4px;background:#e0e0e0;"></div>
<div style="position:absolute;left:922.0px;top:175.1px;width:15.5px;height:1.4px;background:#e0e0e0;"></div>
<div class="t" style="left:608.3px;top:170px">                                                <span style="color:#3dd89d">IdentitytoolkitRelyingpartyDownloadAcc</span></div>
<div class="t" style="left:608.3px;top:184px"><span style="color:#3dd89d">ountRequest.php</span></div>
<div style="position:absolute;left:610.85px;top:196px;width:1.35px;height:14px;background:#e0e0e0;"></div>
<div style="position:absolute;left:638.85px;top:196px;width:1.35px;height:14px;background:#e0e0e0;"></div>
<div style="position:absolute;left:666.85px;top:196px;width:1.35px;height:14px;background:#e0e0e0;"></div>
<div style="position:absolute;left:694.85px;top:196px;width:1.35px;height:14px;background:#e0e0e0;"></div>
<div style="position:absolute;left:806.85px;top:196px;width:1.35px;height:14px;background:#e0e0e0;"></div>
<div style="position:absolute;left:834.85px;top:196px;width:1.35px;height:14px;background:#e0e0e0;"></div>
<div style="position:absolute;left:862.85px;top:196px;width:1.35px;height:14px;background:#e0e0e0;"></div>
<div style="position:absolute;left:890.85px;top:196px;width:1.35px;height:14px;background:#e0e0e0;"></div>
<div style="position:absolute;left:918.85px;top:196px;width:1.35px;height:14px;background:#e0e0e0;"></div>
<div style="position:absolute;left:920.2px;top:203.1px;width:1.7999999999999772px;height:1.4px;background:#e0e0e0;"></div>
<div style="position:absolute;left:922.0px;top:203.1px;width:15.5px;height:1.4px;background:#e0e0e0;"></div>
<div class="t" style="left:608.3px;top:198px">                                                <span style="color:#3dd89d">IdentitytoolkitRelyingpartyEmailLinkSi</span></div>
<div class="t" style="left:608.3px;top:212px"><span style="color:#3dd89d">gninRequest.php</span></div>
<div style="position:absolute;left:610.85px;top:224px;width:1.35px;height:14px;background:#e0e0e0;"></div>
<div style="position:absolute;left:638.85px;top:224px;width:1.35px;height:14px;background:#e0e0e0;"></div>
<div style="position:absolute;left:666.85px;top:224px;width:1.35px;height:14px;background:#e0e0e0;"></div>
<div style="position:absolute;left:694.85px;top:224px;width:1.35px;height:14px;background:#e0e0e0;"></div>
<div style="position:absolute;left:806.85px;top:224px;width:1.35px;height:14px;background:#e0e0e0;"></div>
<div style="position:absolute;left:834.85px;top:224px;width:1.35px;height:14px;background:#e0e0e0;"></div>
<div style="position:absolute;left:862.85px;top:224px;width:1.35px;height:14px;background:#e0e0e0;"></div>
<div style="position:absolute;left:890.85px;top:224px;width:1.35px;height:14px;background:#e0e0e0;"></div>
<div style="position:absolute;left:918.85px;top:224px;width:1.35px;height:14px;background:#e0e0e0;"></div>
<div style="position:absolute;left:920.2px;top:231.1px;width:1.7999999999999772px;height:1.4px;background:#e0e0e0;"></div>
<div style="position:absolute;left:922.0px;top:231.1px;width:15.5px;height:1.4px;background:#e0e0e0;"></div>
<div class="t" style="left:608.3px;top:226px">                                                <span style="color:#3dd89d">IdentitytoolkitRelyingpartyGetAccountI</span></div>
<div class="t" style="left:608.3px;top:240px"><span style="color:#3dd89d">nfoRequest.php</span></div>
<div style="position:absolute;left:610.85px;top:252px;width:1.35px;height:14px;background:#e0e0e0;"></div>
<div style="position:absolute;left:638.85px;top:252px;width:1.35px;height:14px;background:#e0e0e0;"></div>
<div style="position:absolute;left:666.85px;top:252px;width:1.35px;height:14px;background:#e0e0e0;"></div>
<div style="position:absolute;left:694.85px;top:252px;width:1.35px;height:14px;background:#e0e0e0;"></div>
<div style="position:absolute;left:806.85px;top:252px;width:1.35px;height:14px;background:#e0e0e0;"></div>
<div style="position:absolute;left:834.85px;top:252px;width:1.35px;height:14px;background:#e0e0e0;"></div>
<div style="position:absolute;left:862.85px;top:252px;width:1.35px;height:14px;background:#e0e0e0;"></div>
<div style="position:absolute;left:890.85px;top:252px;width:1.35px;height:14px;background:#e0e0e0;"></div>
<div style="position:absolute;left:918.85px;top:252px;width:1.35px;height:14px;background:#e0e0e0;"></div>
<div style="position:absolute;left:920.2px;top:259.1px;width:1.7999999999999772px;height:1.4px;background:#e0e0e0;"></div>
<div style="position:absolute;left:922.0px;top:259.1px;width:15.5px;height:1.4px;background:#e0e0e0;"></div>
<div class="t" style="left:608.3px;top:254px">                                                <span style="color:#3dd89d">IdentitytoolkitRelyingpartyGetProjectC</span></div>
<div class="t" style="left:608.3px;top:268px"><span style="color:#3dd89d">onfigResponse.php</span></div>
<div style="position:absolute;left:610.85px;top:280px;width:1.35px;height:14px;background:#e0e0e0;"></div>
<div style="position:absolute;left:638.85px;top:280px;width:1.35px;height:14px;background:#e0e0e0;"></div>
<div style="position:absolute;left:666.85px;top:280px;width:1.35px;height:14px;background:#e0e0e0;"></div>
<div style="position:absolute;left:694.85px;top:280px;width:1.35px;height:14px;background:#e0e0e0;"></div>
<div style="position:absolute;left:806.85px;top:280px;width:1.35px;height:14px;background:#e0e0e0;"></div>
<div style="position:absolute;left:834.85px;top:280px;width:1.35px;height:14px;background:#e0e0e0;"></div>
<div style="position:absolute;left:862.85px;top:280px;width:1.35px;height:14px;background:#e0e0e0;"></div>
<div style="position:absolute;left:890.85px;top:280px;width:1.35px;height:14px;background:#e0e0e0;"></div>
<div style="position:absolute;left:918.85px;top:280px;width:1.35px;height:14px;background:#e0e0e0;"></div>
<div style="position:absolute;left:920.2px;top:287.1px;width:1.7999999999999772px;height:1.4px;background:#e0e0e0;"></div>
<div style="position:absolute;left:922.0px;top:287.1px;width:15.5px;height:1.4px;background:#e0e0e0;"></div>
<div class="t" style="left:608.3px;top:282px">                                                <span style="color:#3dd89d">IdentitytoolkitRelyingpartyResetPasswo</span></div>
<div class="t" style="left:608.3px;top:296px"><span style="color:#3dd89d">rdRequest.php</span></div>
<div style="position:absolute;left:610.85px;top:308px;width:1.35px;height:14px;background:#e0e0e0;"></div>
<div style="position:absolute;left:638.85px;top:308px;width:1.35px;height:14px;background:#e0e0e0;"></div>
<div style="position:absolute;left:666.85px;top:308px;width:1.35px;height:14px;background:#e0e0e0;"></div>
<div style="position:absolute;left:694.85px;top:308px;width:1.35px;height:14px;background:#e0e0e0;"></div>
<div style="position:absolute;left:806.85px;top:308px;width:1.35px;height:14px;background:#e0e0e0;"></div>
<div style="position:absolute;left:834.85px;top:308px;width:1.35px;height:14px;background:#e0e0e0;"></div>
<div style="position:absolute;left:862.85px;top:308px;width:1.35px;height:14px;background:#e0e0e0;"></div>
<div style="position:absolute;left:890.85px;top:308px;width:1.35px;height:14px;background:#e0e0e0;"></div>
<div style="position:absolute;left:918.85px;top:308px;width:1.35px;height:14px;background:#e0e0e0;"></div>
<div style="position:absolute;left:920.2px;top:315.1px;width:1.7999999999999772px;height:1.4px;background:#e0e0e0;"></div>
<div style="position:absolute;left:922.0px;top:315.1px;width:15.5px;height:1.4px;background:#e0e0e0;"></div>
<div class="t" style="left:608.3px;top:310px">                                                <span style="color:#3dd89d">IdentitytoolkitRelyingpartySendVerific</span></div>
<div class="t" style="left:608.3px;top:324px"><span style="color:#3dd89d">ationCodeRequest.php</span></div>
<div style="position:absolute;left:610.85px;top:336px;width:1.35px;height:14px;background:#e0e0e0;"></div>
<div style="position:absolute;left:638.85px;top:336px;width:1.35px;height:14px;background:#e0e0e0;"></div>
<div style="position:absolute;left:666.85px;top:336px;width:1.35px;height:14px;background:#e0e0e0;"></div>
<div style="position:absolute;left:694.85px;top:336px;width:1.35px;height:14px;background:#e0e0e0;"></div>
<div style="position:absolute;left:806.85px;top:336px;width:1.35px;height:14px;background:#e0e0e0;"></div>
<div style="position:absolute;left:834.85px;top:336px;width:1.35px;height:14px;background:#e0e0e0;"></div>
<div style="position:absolute;left:862.85px;top:336px;width:1.35px;height:14px;background:#e0e0e0;"></div>
<div style="position:absolute;left:890.85px;top:336px;width:1.35px;height:14px;background:#e0e0e0;"></div>
<div style="position:absolute;left:918.85px;top:336px;width:1.35px;height:14px;background:#e0e0e0;"></div>
<div style="position:absolute;left:920.2px;top:343.1px;width:1.7999999999999772px;height:1.4px;background:#e0e0e0;"></div>
<div style="position:absolute;left:922.0px;top:343.1px;width:15.5px;height:1.4px;background:#e0e0e0;"></div>
<div class="t" style="left:608.3px;top:338px">                                                <span style="color:#3dd89d">IdentitytoolkitRelyingpartySendVerific</span></div>
<div class="t" style="left:608.3px;top:352px"><span style="color:#3dd89d">ationCodeResponse.php</span></div>
<div style="position:absolute;left:610.85px;top:364px;width:1.35px;height:14px;background:#e0e0e0;"></div>
<div style="position:absolute;left:638.85px;top:364px;width:1.35px;height:14px;background:#e0e0e0;"></div>
<div style="position:absolute;left:666.85px;top:364px;width:1.35px;height:14px;background:#e0e0e0;"></div>
<div style="position:absolute;left:694.85px;top:364px;width:1.35px;height:14px;background:#e0e0e0;"></div>
<div style="position:absolute;left:806.85px;top:364px;width:1.35px;height:14px;background:#e0e0e0;"></div>
<div style="position:absolute;left:834.85px;top:364px;width:1.35px;height:14px;background:#e0e0e0;"></div>
<div style="position:absolute;left:862.85px;top:364px;width:1.35px;height:14px;background:#e0e0e0;"></div>
<div style="position:absolute;left:890.85px;top:364px;width:1.35px;height:14px;background:#e0e0e0;"></div>
<div style="position:absolute;left:918.85px;top:364px;width:1.35px;height:14px;background:#e0e0e0;"></div>
<div style="position:absolute;left:920.2px;top:371.1px;width:1.7999999999999772px;height:1.4px;background:#e0e0e0;"></div>
<div style="position:absolute;left:922.0px;top:371.1px;width:15.5px;height:1.4px;background:#e0e0e0;"></div>
<div class="t" style="left:608.3px;top:366px">                                                <span style="color:#3dd89d">IdentitytoolkitRelyingpartySetAccountI</span></div>
<div class="t" style="left:608.3px;top:380px"><span style="color:#3dd89d">nfoRequest.php</span></div>
<div style="position:absolute;left:610.85px;top:392px;width:1.35px;height:14px;background:#e0e0e0;"></div>
<div style="position:absolute;left:638.85px;top:392px;width:1.35px;height:14px;background:#e0e0e0;"></div>
<div style="position:absolute;left:666.85px;top:392px;width:1.35px;height:14px;background:#e0e0e0;"></div>
<div style="position:absolute;left:694.85px;top:392px;width:1.35px;height:14px;background:#e0e0e0;"></div>
<div style="position:absolute;left:806.85px;top:392px;width:1.35px;height:14px;background:#e0e0e0;"></div>
<div style="position:absolute;left:834.85px;top:392px;width:1.35px;height:14px;background:#e0e0e0;"></div>
<div style="position:absolute;left:862.85px;top:392px;width:1.35px;height:14px;background:#e0e0e0;"></div>
<div style="position:absolute;left:890.85px;top:392px;width:1.35px;height:14px;background:#e0e0e0;"></div>
<div style="position:absolute;left:918.85px;top:392px;width:1.35px;height:14px;background:#e0e0e0;"></div>
<div style="position:absolute;left:920.2px;top:399.1px;width:1.7999999999999772px;height:1.4px;background:#e0e0e0;"></div>
<div style="position:absolute;left:922.0px;top:399.1px;width:15.5px;height:1.4px;background:#e0e0e0;"></div>
<div class="t" style="left:608.3px;top:394px">                                                <span style="color:#3dd89d">IdentitytoolkitRelyingpartySetProjectC</span></div>
<div class="t" style="left:608.3px;top:408px"><span style="color:#3dd89d">onfigRequest.php</span></div>
<div style="position:absolute;left:610.85px;top:420px;width:1.35px;height:14px;background:#e0e0e0;"></div>
<div style="position:absolute;left:638.85px;top:420px;width:1.35px;height:14px;background:#e0e0e0;"></div>
<div style="position:absolute;left:666.85px;top:420px;width:1.35px;height:14px;background:#e0e0e0;"></div>
<div style="position:absolute;left:694.85px;top:420px;width:1.35px;height:14px;background:#e0e0e0;"></div>
<div style="position:absolute;left:806.85px;top:420px;width:1.35px;height:14px;background:#e0e0e0;"></div>
<div style="position:absolute;left:834.85px;top:420px;width:1.35px;height:14px;background:#e0e0e0;"></div>
<div style="position:absolute;left:862.85px;top:420px;width:1.35px;height:14px;background:#e0e0e0;"></div>
<div style="position:absolute;left:890.85px;top:420px;width:1.35px;height:14px;background:#e0e0e0;"></div>
<div style="position:absolute;left:918.85px;top:420px;width:1.35px;height:14px;background:#e0e0e0;"></div>
<div style="position:absolute;left:920.2px;top:427.1px;width:1.7999999999999772px;height:1.4px;background:#e0e0e0;"></div>
<div style="position:absolute;left:922.0px;top:427.1px;width:15.5px;height:1.4px;background:#e0e0e0;"></div>
<div class="t" style="left:608.3px;top:422px">                                                <span style="color:#3dd89d">IdentitytoolkitRelyingpartySetProjectC</span></div>
<div class="t" style="left:608.3px;top:436px"><span style="color:#3dd89d">onfigResponse.php</span></div>
<div style="position:absolute;left:610.85px;top:448px;width:1.35px;height:14px;background:#e0e0e0;"></div>
<div style="position:absolute;left:638.85px;top:448px;width:1.35px;height:14px;background:#e0e0e0;"></div>
<div style="position:absolute;left:666.85px;top:448px;width:1.35px;height:14px;background:#e0e0e0;"></div>
<div style="position:absolute;left:694.85px;top:448px;width:1.35px;height:14px;background:#e0e0e0;"></div>
<div style="position:absolute;left:806.85px;top:448px;width:1.35px;height:14px;background:#e0e0e0;"></div>
<div style="position:absolute;left:834.85px;top:448px;width:1.35px;height:14px;background:#e0e0e0;"></div>
<div style="position:absolute;left:862.85px;top:448px;width:1.35px;height:14px;background:#e0e0e0;"></div>
<div style="position:absolute;left:890.85px;top:448px;width:1.35px;height:14px;background:#e0e0e0;"></div>
<div style="position:absolute;left:918.85px;top:448px;width:1.35px;height:14px;background:#e0e0e0;"></div>
<div style="position:absolute;left:920.2px;top:455.1px;width:1.7999999999999772px;height:1.4px;background:#e0e0e0;"></div>
<div style="position:absolute;left:922.0px;top:455.1px;width:15.5px;height:1.4px;background:#e0e0e0;"></div>
<div class="t" style="left:608.3px;top:450px">                                                <span style="color:#3dd89d">IdentitytoolkitRelyingpartySignOutUser</span></div>
<div class="t" style="left:608.3px;top:464px"><span style="color:#3dd89d">Request.php</span></div>
<div style="position:absolute;left:610.85px;top:476px;width:1.35px;height:14px;background:#e0e0e0;"></div>
<div style="position:absolute;left:638.85px;top:476px;width:1.35px;height:14px;background:#e0e0e0;"></div>
<div style="position:absolute;left:666.85px;top:476px;width:1.35px;height:14px;background:#e0e0e0;"></div>
<div style="position:absolute;left:694.85px;top:476px;width:1.35px;height:14px;background:#e0e0e0;"></div>
<div style="position:absolute;left:806.85px;top:476px;width:1.35px;height:14px;background:#e0e0e0;"></div>
<div style="position:absolute;left:834.85px;top:476px;width:1.35px;height:14px;background:#e0e0e0;"></div>
<div style="position:absolute;left:862.85px;top:476px;width:1.35px;height:14px;background:#e0e0e0;"></div>
<div style="position:absolute;left:890.85px;top:476px;width:1.35px;height:14px;background:#e0e0e0;"></div>
<div style="position:absolute;left:918.85px;top:476px;width:1.35px;height:14px;background:#e0e0e0;"></div>
<div style="position:absolute;left:920.2px;top:483.1px;width:1.7999999999999772px;height:1.4px;background:#e0e0e0;"></div>
<div style="position:absolute;left:922.0px;top:483.1px;width:15.5px;height:1.4px;background:#e0e0e0;"></div>
<div class="t" style="left:608.3px;top:478px">                                                <span style="color:#3dd89d">IdentitytoolkitRelyingpartySignOutUser</span></div>
<div class="t" style="left:608.3px;top:492px"><span style="color:#3dd89d">Response.php</span></div>
<div style="position:absolute;left:610.85px;top:504px;width:1.35px;height:14px;background:#e0e0e0;"></div>
<div style="position:absolute;left:638.85px;top:504px;width:1.35px;height:14px;background:#e0e0e0;"></div>
<div style="position:absolute;left:666.85px;top:504px;width:1.35px;height:14px;background:#e0e0e0;"></div>
<div style="position:absolute;left:694.85px;top:504px;width:1.35px;height:14px;background:#e0e0e0;"></div>
<div style="position:absolute;left:806.85px;top:504px;width:1.35px;height:14px;background:#e0e0e0;"></div>
<div style="position:absolute;left:834.85px;top:504px;width:1.35px;height:14px;background:#e0e0e0;"></div>
<div style="position:absolute;left:862.85px;top:504px;width:1.35px;height:14px;background:#e0e0e0;"></div>
<div style="position:absolute;left:890.85px;top:504px;width:1.35px;height:14px;background:#e0e0e0;"></div>
<div style="position:absolute;left:918.85px;top:504px;width:1.35px;height:14px;background:#e0e0e0;"></div>
<div style="position:absolute;left:920.2px;top:511.1px;width:1.7999999999999772px;height:1.4px;background:#e0e0e0;"></div>
<div style="position:absolute;left:922.0px;top:511.1px;width:15.5px;height:1.4px;background:#e0e0e0;"></div>
<div class="t" style="left:608.3px;top:506px">                                                <span style="color:#3dd89d">IdentitytoolkitRelyingpartySignupNewUs</span></div>
<div class="t" style="left:608.3px;top:520px"><span style="color:#3dd89d">erRequest.php</span></div>
<div style="position:absolute;left:610.85px;top:532px;width:1.35px;height:14px;background:#e0e0e0;"></div>
<div style="position:absolute;left:638.85px;top:532px;width:1.35px;height:14px;background:#e0e0e0;"></div>
<div style="position:absolute;left:666.85px;top:532px;width:1.35px;height:14px;background:#e0e0e0;"></div>
<div style="position:absolute;left:694.85px;top:532px;width:1.35px;height:14px;background:#e0e0e0;"></div>
<div style="position:absolute;left:806.85px;top:532px;width:1.35px;height:14px;background:#e0e0e0;"></div>
<div style="position:absolute;left:834.85px;top:532px;width:1.35px;height:14px;background:#e0e0e0;"></div>
<div style="position:absolute;left:862.85px;top:532px;width:1.35px;height:14px;background:#e0e0e0;"></div>
<div style="position:absolute;left:890.85px;top:532px;width:1.35px;height:14px;background:#e0e0e0;"></div>
<div style="position:absolute;left:918.85px;top:532px;width:1.35px;height:14px;background:#e0e0e0;"></div>
<div style="position:absolute;left:920.2px;top:539.1px;width:1.7999999999999772px;height:1.4px;background:#e0e0e0;"></div>
<div style="position:absolute;left:922.0px;top:539.1px;width:15.5px;height:1.4px;background:#e0e0e0;"></div>
<div class="t" style="left:608.3px;top:534px">                                                <span style="color:#3dd89d">IdentitytoolkitRelyingpartyUploadAccou</span></div>
<div class="t" style="left:608.3px;top:548px"><span style="color:#3dd89d">ntRequest.php</span></div>
<div style="position:absolute;left:610.85px;top:560px;width:1.35px;height:14px;background:#e0e0e0;"></div>
<div style="position:absolute;left:638.85px;top:560px;width:1.35px;height:14px;background:#e0e0e0;"></div>
<div style="position:absolute;left:666.85px;top:560px;width:1.35px;height:14px;background:#e0e0e0;"></div>
<div style="position:absolute;left:694.85px;top:560px;width:1.35px;height:14px;background:#e0e0e0;"></div>
<div style="position:absolute;left:806.85px;top:560px;width:1.35px;height:14px;background:#e0e0e0;"></div>
<div style="position:absolute;left:834.85px;top:560px;width:1.35px;height:14px;background:#e0e0e0;"></div>
<div style="position:absolute;left:862.85px;top:560px;width:1.35px;height:14px;background:#e0e0e0;"></div>
<div style="position:absolute;left:890.85px;top:560px;width:1.35px;height:14px;background:#e0e0e0;"></div>
<div style="position:absolute;left:918.85px;top:560px;width:1.35px;height:14px;background:#e0e0e0;"></div>
<div style="position:absolute;left:920.2px;top:567.1px;width:1.7999999999999772px;height:1.4px;background:#e0e0e0;"></div>
<div style="position:absolute;left:922.0px;top:567.1px;width:15.5px;height:1.4px;background:#e0e0e0;"></div>
<div class="t" style="left:608.3px;top:562px">                                                <span style="color:#3dd89d">IdentitytoolkitRelyingpartyVerifyAsser</span></div>
<div class="t" style="left:608.3px;top:576px"><span style="color:#3dd89d">tionRequest.php</span></div>
<div style="position:absolute;left:610.85px;top:588px;width:1.35px;height:14px;background:#e0e0e0;"></div>
<div style="position:absolute;left:638.85px;top:588px;width:1.35px;height:14px;background:#e0e0e0;"></div>
<div style="position:absolute;left:666.85px;top:588px;width:1.35px;height:14px;background:#e0e0e0;"></div>
<div style="position:absolute;left:694.85px;top:588px;width:1.35px;height:14px;background:#e0e0e0;"></div>
<div style="position:absolute;left:806.85px;top:588px;width:1.35px;height:14px;background:#e0e0e0;"></div>
<div style="position:absolute;left:834.85px;top:588px;width:1.35px;height:14px;background:#e0e0e0;"></div>
<div style="position:absolute;left:862.85px;top:588px;width:1.35px;height:14px;background:#e0e0e0;"></div>
<div style="position:absolute;left:890.85px;top:588px;width:1.35px;height:14px;background:#e0e0e0;"></div>
<div style="position:absolute;left:918.85px;top:588px;width:1.35px;height:14px;background:#e0e0e0;"></div>
<div style="position:absolute;left:920.2px;top:595.1px;width:1.7999999999999772px;height:1.4px;background:#e0e0e0;"></div>
<div style="position:absolute;left:922.0px;top:595.1px;width:15.5px;height:1.4px;background:#e0e0e0;"></div>
<div class="t" style="left:608.3px;top:590px">                                                <span style="color:#3dd89d">IdentitytoolkitRelyingpartyVerifyCusto</span></div>
<div class="t" style="left:608.3px;top:604px"><span style="color:#3dd89d">mTokenRequest.php</span></div>
<div style="position:absolute;left:610.85px;top:616px;width:1.35px;height:14px;background:#e0e0e0;"></div>
<div style="position:absolute;left:638.85px;top:616px;width:1.35px;height:14px;background:#e0e0e0;"></div>
<div style="position:absolute;left:666.85px;top:616px;width:1.35px;height:14px;background:#e0e0e0;"></div>
<div style="position:absolute;left:694.85px;top:616px;width:1.35px;height:14px;background:#e0e0e0;"></div>
<div style="position:absolute;left:806.85px;top:616px;width:1.35px;height:14px;background:#e0e0e0;"></div>
<div style="position:absolute;left:834.85px;top:616px;width:1.35px;height:14px;background:#e0e0e0;"></div>
<div style="position:absolute;left:862.85px;top:616px;width:1.35px;height:14px;background:#e0e0e0;"></div>
<div style="position:absolute;left:890.85px;top:616px;width:1.35px;height:14px;background:#e0e0e0;"></div>
<div style="position:absolute;left:918.85px;top:616px;width:1.35px;height:14px;background:#e0e0e0;"></div>
<div style="position:absolute;left:920.2px;top:623.1px;width:1.7999999999999772px;height:1.4px;background:#e0e0e0;"></div>
<div style="position:absolute;left:922.0px;top:623.1px;width:15.5px;height:1.4px;background:#e0e0e0;"></div>
<div class="t" style="left:608.3px;top:618px">                                                <span style="color:#3dd89d">IdentitytoolkitRelyingpartyVerifyPassw</span></div>
<div class="t" style="left:608.3px;top:632px"><span style="color:#3dd89d">ordRequest.php</span></div>
<div style="position:absolute;left:610.85px;top:644px;width:1.35px;height:14px;background:#e0e0e0;"></div>
<div style="position:absolute;left:638.85px;top:644px;width:1.35px;height:14px;background:#e0e0e0;"></div>
<div style="position:absolute;left:666.85px;top:644px;width:1.35px;height:14px;background:#e0e0e0;"></div>
<div style="position:absolute;left:694.85px;top:644px;width:1.35px;height:14px;background:#e0e0e0;"></div>
<div style="position:absolute;left:806.85px;top:644px;width:1.35px;height:14px;background:#e0e0e0;"></div>
<div style="position:absolute;left:834.85px;top:644px;width:1.35px;height:14px;background:#e0e0e0;"></div>
<div style="position:absolute;left:862.85px;top:644px;width:1.35px;height:14px;background:#e0e0e0;"></div>
<div style="position:absolute;left:890.85px;top:644px;width:1.35px;height:14px;background:#e0e0e0;"></div>
<div style="position:absolute;left:918.85px;top:644px;width:1.35px;height:14px;background:#e0e0e0;"></div>
<div style="position:absolute;left:920.2px;top:651.1px;width:1.7999999999999772px;height:1.4px;background:#e0e0e0;"></div>
<div style="position:absolute;left:922.0px;top:651.1px;width:15.5px;height:1.4px;background:#e0e0e0;"></div>
<div class="t" style="left:608.3px;top:646px">                                                <span style="color:#3dd89d">IdentitytoolkitRelyingpartyVerifyPhone</span></div>
<div class="t" style="left:608.3px;top:660px"><span style="color:#3dd89d">NumberRequest.php</span></div>
<div style="position:absolute;left:610.85px;top:672px;width:1.35px;height:14px;background:#e0e0e0;"></div>
<div style="position:absolute;left:638.85px;top:672px;width:1.35px;height:14px;background:#e0e0e0;"></div>
<div style="position:absolute;left:666.85px;top:672px;width:1.35px;height:14px;background:#e0e0e0;"></div>
<div style="position:absolute;left:694.85px;top:672px;width:1.35px;height:14px;background:#e0e0e0;"></div>
<div style="position:absolute;left:806.85px;top:672px;width:1.35px;height:14px;background:#e0e0e0;"></div>
<div style="position:absolute;left:834.85px;top:672px;width:1.35px;height:14px;background:#e0e0e0;"></div>
<div style="position:absolute;left:862.85px;top:672px;width:1.35px;height:14px;background:#e0e0e0;"></div>
<div style="position:absolute;left:890.85px;top:672px;width:1.35px;height:14px;background:#e0e0e0;"></div>
<div style="position:absolute;left:918.85px;top:672px;width:1.35px;height:14px;background:#e0e0e0;"></div>
<div style="position:absolute;left:920.2px;top:679.1px;width:1.7999999999999772px;height:1.4px;background:#e0e0e0;"></div>
<div style="position:absolute;left:922.0px;top:679.1px;width:15.5px;height:1.4px;background:#e0e0e0;"></div>
<div class="t" style="left:608.3px;top:674px">                                                <span style="color:#3dd89d">IdentitytoolkitRelyingpartyVerifyPhone</span></div>
<div class="t" style="left:608.3px;top:688px"><span style="color:#3dd89d">NumberResponse.php</span></div>
<div style="position:absolute;left:610.85px;top:700px;width:1.35px;height:14px;background:#e0e0e0;"></div>
<div style="position:absolute;left:638.85px;top:700px;width:1.35px;height:14px;background:#e0e0e0;"></div>
<div style="position:absolute;left:666.85px;top:700px;width:1.35px;height:14px;background:#e0e0e0;"></div>
<div style="position:absolute;left:694.85px;top:700px;width:1.35px;height:14px;background:#e0e0e0;"></div>
<div style="position:absolute;left:806.85px;top:700px;width:1.35px;height:14px;background:#e0e0e0;"></div>
<div style="position:absolute;left:834.85px;top:700px;width:1.35px;height:14px;background:#e0e0e0;"></div>
<div style="position:absolute;left:862.85px;top:700px;width:1.35px;height:14px;background:#e0e0e0;"></div>
<div style="position:absolute;left:890.85px;top:700px;width:1.35px;height:14px;background:#e0e0e0;"></div>
<div style="position:absolute;left:918.85px;top:700px;width:1.35px;height:14px;background:#e0e0e0;"></div>
<div style="position:absolute;left:920.2px;top:707.1px;width:1.7999999999999772px;height:1.4px;background:#e0e0e0;"></div>
<div style="position:absolute;left:922.0px;top:707.1px;width:15.5px;height:1.4px;background:#e0e0e0;"></div>
<div class="t" style="left:608.3px;top:702px">                                                <span style="color:#3dd89d">IdpConfig.php</span></div>
<div style="position:absolute;left:610.85px;top:714px;width:1.35px;height:14px;background:#e0e0e0;"></div>
<div style="position:absolute;left:638.85px;top:714px;width:1.35px;height:14px;background:#e0e0e0;"></div>
<div style="position:absolute;left:666.85px;top:714px;width:1.35px;height:14px;background:#e0e0e0;"></div>
<div style="position:absolute;left:694.85px;top:714px;width:1.35px;height:14px;background:#e0e0e0;"></div>
<div style="position:absolute;left:806.85px;top:714px;width:1.35px;height:14px;background:#e0e0e0;"></div>
<div style="position:absolute;left:834.85px;top:714px;width:1.35px;height:14px;background:#e0e0e0;"></div>
<div style="position:absolute;left:862.85px;top:714px;width:1.35px;height:14px;background:#e0e0e0;"></div>
<div style="position:absolute;left:890.85px;top:714px;width:1.35px;height:14px;background:#e0e0e0;"></div>
<div style="position:absolute;left:918.85px;top:714px;width:1.35px;height:14px;background:#e0e0e0;"></div>
<div style="position:absolute;left:920.2px;top:721.1px;width:1.7999999999999772px;height:1.4px;background:#e0e0e0;"></div>
<div style="position:absolute;left:922.0px;top:721.1px;width:15.5px;height:1.4px;background:#e0e0e0;"></div>
<div class="t" style="left:608.3px;top:716px">                                                <span style="color:#3dd89d">Relyingparty.php</span></div>
<div style="position:absolute;left:610.85px;top:728px;width:1.35px;height:14px;background:#e0e0e0;"></div>
<div style="position:absolute;left:638.85px;top:728px;width:1.35px;height:14px;background:#e0e0e0;"></div>
<div style="position:absolute;left:666.85px;top:728px;width:1.35px;height:14px;background:#e0e0e0;"></div>
<div style="position:absolute;left:694.85px;top:728px;width:1.35px;height:14px;background:#e0e0e0;"></div>
<div style="position:absolute;left:806.85px;top:728px;width:1.35px;height:14px;background:#e0e0e0;"></div>
<div style="position:absolute;left:834.85px;top:728px;width:1.35px;height:14px;background:#e0e0e0;"></div>
<div style="position:absolute;left:862.85px;top:728px;width:1.35px;height:14px;background:#e0e0e0;"></div>
<div style="position:absolute;left:890.85px;top:728px;width:1.35px;height:14px;background:#e0e0e0;"></div>
<div style="position:absolute;left:918.85px;top:728px;width:1.35px;height:14px;background:#e0e0e0;"></div>
<div style="position:absolute;left:920.2px;top:735.1px;width:1.7999999999999772px;height:1.4px;background:#e0e0e0;"></div>
<div style="position:absolute;left:922.0px;top:735.1px;width:15.5px;height:1.4px;background:#e0e0e0;"></div>
<div class="t" style="left:608.3px;top:730px">                                                <span style="color:#3dd89d">ResetPasswordResponse.php</span></div>
<div style="position:absolute;left:610.85px;top:742px;width:1.35px;height:14px;background:#e0e0e0;"></div>
<div style="position:absolute;left:638.85px;top:742px;width:1.35px;height:14px;background:#e0e0e0;"></div>
<div style="position:absolute;left:666.85px;top:742px;width:1.35px;height:14px;background:#e0e0e0;"></div>
<div style="position:absolute;left:694.85px;top:742px;width:1.35px;height:14px;background:#e0e0e0;"></div>
<div style="position:absolute;left:806.85px;top:742px;width:1.35px;height:14px;background:#e0e0e0;"></div>
<div style="position:absolute;left:834.85px;top:742px;width:1.35px;height:14px;background:#e0e0e0;"></div>
<div style="position:absolute;left:862.85px;top:742px;width:1.35px;height:14px;background:#e0e0e0;"></div>
<div style="position:absolute;left:890.85px;top:742px;width:1.35px;height:14px;background:#e0e0e0;"></div>
<div style="position:absolute;left:918.85px;top:742px;width:1.35px;height:14px;background:#e0e0e0;"></div>
<div style="position:absolute;left:920.2px;top:749.1px;width:1.7999999999999772px;height:1.4px;background:#e0e0e0;"></div>
<div style="position:absolute;left:922.0px;top:749.1px;width:15.5px;height:1.4px;background:#e0e0e0;"></div>
<div class="t" style="left:608.3px;top:744px">                                                <span style="color:#4a8cf4">Resource</span></div>
<div style="position:absolute;left:610.85px;top:756px;width:1.35px;height:14px;background:#e0e0e0;"></div>
<div style="position:absolute;left:638.85px;top:756px;width:1.35px;height:14px;background:#e0e0e0;"></div>
<div style="position:absolute;left:666.85px;top:756px;width:1.35px;height:14px;background:#e0e0e0;"></div>
<div style="position:absolute;left:694.85px;top:756px;width:1.35px;height:14px;background:#e0e0e0;"></div>
<div style="position:absolute;left:806.85px;top:756px;width:1.35px;height:14px;background:#e0e0e0;"></div>
<div style="position:absolute;left:834.85px;top:756px;width:1.35px;height:14px;background:#e0e0e0;"></div>
<div style="position:absolute;left:862.85px;top:756px;width:1.35px;height:14px;background:#e0e0e0;"></div>
<div style="position:absolute;left:890.85px;top:756px;width:1.35px;height:14px;background:#e0e0e0;"></div>
<div style="position:absolute;left:918.85px;top:756px;width:1.35px;height:14px;background:#e0e0e0;"></div>
<div style="position:absolute;left:946.85px;top:756px;width:1.35px;height:8.5px;background:#e0e0e0;"></div>
<div style="position:absolute;left:948.2px;top:763.1px;width:1.7999999999999772px;height:1.4px;background:#e0e0e0;"></div>
<div style="position:absolute;left:950.0px;top:763.1px;width:15.5px;height:1.4px;background:#e0e0e0;"></div>
<div class="t" style="left:608.3px;top:758px">                                                    <span style="color:#3dd89d">Relyingparty.php</span></div>
<div style="position:absolute;left:610.85px;top:770px;width:1.35px;height:14px;background:#e0e0e0;"></div>
<div style="position:absolute;left:638.85px;top:770px;width:1.35px;height:14px;background:#e0e0e0;"></div>
<div style="position:absolute;left:666.85px;top:770px;width:1.35px;height:14px;background:#e0e0e0;"></div>
<div style="position:absolute;left:694.85px;top:770px;width:1.35px;height:14px;background:#e0e0e0;"></div>
<div style="position:absolute;left:806.85px;top:770px;width:1.35px;height:14px;background:#e0e0e0;"></div>
<div style="position:absolute;left:834.85px;top:770px;width:1.35px;height:14px;background:#e0e0e0;"></div>
<div style="position:absolute;left:862.85px;top:770px;width:1.35px;height:14px;background:#e0e0e0;"></div>
<div style="position:absolute;left:890.85px;top:770px;width:1.35px;height:14px;background:#e0e0e0;"></div>
<div style="position:absolute;left:918.85px;top:770px;width:1.35px;height:14px;background:#e0e0e0;"></div>
<div style="position:absolute;left:920.2px;top:777.1px;width:1.7999999999999772px;height:1.4px;background:#e0e0e0;"></div>
<div style="position:absolute;left:922.0px;top:777.1px;width:15.5px;height:1.4px;background:#e0e0e0;"></div>
<div class="t" style="left:608.3px;top:772px">                                                <span style="color:#3dd89d">SetAccountInfoResponse.php</span></div>
<div style="position:absolute;left:610.85px;top:784px;width:1.35px;height:14px;background:#e0e0e0;"></div>
<div style="position:absolute;left:638.85px;top:784px;width:1.35px;height:14px;background:#e0e0e0;"></div>
<div style="position:absolute;left:666.85px;top:784px;width:1.35px;height:14px;background:#e0e0e0;"></div>
<div style="position:absolute;left:694.85px;top:784px;width:1.35px;height:14px;background:#e0e0e0;"></div>
<div style="position:absolute;left:806.85px;top:784px;width:1.35px;height:14px;background:#e0e0e0;"></div>
<div style="position:absolute;left:834.85px;top:784px;width:1.35px;height:14px;background:#e0e0e0;"></div>
<div style="position:absolute;left:862.85px;top:784px;width:1.35px;height:14px;background:#e0e0e0;"></div>
<div style="position:absolute;left:890.85px;top:784px;width:1.35px;height:14px;background:#e0e0e0;"></div>
<div style="position:absolute;left:918.85px;top:784px;width:1.35px;height:14px;background:#e0e0e0;"></div>
<div style="position:absolute;left:920.2px;top:791.1px;width:1.7999999999999772px;height:1.4px;background:#e0e0e0;"></div>
<div style="position:absolute;left:922.0px;top:791.1px;width:15.5px;height:1.4px;background:#e0e0e0;"></div>
<div class="t" style="left:608.3px;top:786px">                                                <span style="color:#3dd89d">SetAccountInfoResponseProviderUserInfo</span></div>
<div class="t" style="left:608.3px;top:800px"><span style="color:#3dd89d">.php</span></div>
<div style="position:absolute;left:610.85px;top:812px;width:1.35px;height:14px;background:#e0e0e0;"></div>
<div style="position:absolute;left:638.85px;top:812px;width:1.35px;height:14px;background:#e0e0e0;"></div>
<div style="position:absolute;left:666.85px;top:812px;width:1.35px;height:14px;background:#e0e0e0;"></div>
<div style="position:absolute;left:694.85px;top:812px;width:1.35px;height:14px;background:#e0e0e0;"></div>
<div style="position:absolute;left:806.85px;top:812px;width:1.35px;height:14px;background:#e0e0e0;"></div>
<div style="position:absolute;left:834.85px;top:812px;width:1.35px;height:14px;background:#e0e0e0;"></div>
<div style="position:absolute;left:862.85px;top:812px;width:1.35px;height:14px;background:#e0e0e0;"></div>
<div style="position:absolute;left:890.85px;top:812px;width:1.35px;height:14px;background:#e0e0e0;"></div>
<div style="position:absolute;left:918.85px;top:812px;width:1.35px;height:14px;background:#e0e0e0;"></div>
<div style="position:absolute;left:920.2px;top:819.1px;width:1.7999999999999772px;height:1.4px;background:#e0e0e0;"></div>
<div style="position:absolute;left:922.0px;top:819.1px;width:15.5px;height:1.4px;background:#e0e0e0;"></div>
<div class="t" style="left:608.3px;top:814px">                                                <span style="color:#3dd89d">SignupNewUserResponse.php</span></div>
<div style="position:absolute;left:610.85px;top:826px;width:1.35px;height:14px;background:#e0e0e0;"></div>
<div style="position:absolute;left:638.85px;top:826px;width:1.35px;height:14px;background:#e0e0e0;"></div>
<div style="position:absolute;left:666.85px;top:826px;width:1.35px;height:14px;background:#e0e0e0;"></div>
<div style="position:absolute;left:694.85px;top:826px;width:1.35px;height:14px;background:#e0e0e0;"></div>
<div style="position:absolute;left:806.85px;top:826px;width:1.35px;height:14px;background:#e0e0e0;"></div>
<div style="position:absolute;left:834.85px;top:826px;width:1.35px;height:14px;background:#e0e0e0;"></div>
<div style="position:absolute;left:862.85px;top:826px;width:1.35px;height:14px;background:#e0e0e0;"></div>
<div style="position:absolute;left:890.85px;top:826px;width:1.35px;height:14px;background:#e0e0e0;"></div>
<div style="position:absolute;left:918.85px;top:826px;width:1.35px;height:14px;background:#e0e0e0;"></div>
<div style="position:absolute;left:920.2px;top:833.1px;width:1.7999999999999772px;height:1.4px;background:#e0e0e0;"></div>
<div style="position:absolute;left:922.0px;top:833.1px;width:15.5px;height:1.4px;background:#e0e0e0;"></div>
<div class="t" style="left:608.3px;top:828px">                                                <span style="color:#3dd89d">UploadAccountResponseError.php</span></div>
<div style="position:absolute;left:610.85px;top:840px;width:1.35px;height:14px;background:#e0e0e0;"></div>
<div style="position:absolute;left:638.85px;top:840px;width:1.35px;height:14px;background:#e0e0e0;"></div>
<div style="position:absolute;left:666.85px;top:840px;width:1.35px;height:14px;background:#e0e0e0;"></div>
<div style="position:absolute;left:694.85px;top:840px;width:1.35px;height:14px;background:#e0e0e0;"></div>
<div style="position:absolute;left:806.85px;top:840px;width:1.35px;height:14px;background:#e0e0e0;"></div>
<div style="position:absolute;left:834.85px;top:840px;width:1.35px;height:14px;background:#e0e0e0;"></div>
<div style="position:absolute;left:862.85px;top:840px;width:1.35px;height:14px;background:#e0e0e0;"></div>
<div style="position:absolute;left:890.85px;top:840px;width:1.35px;height:14px;background:#e0e0e0;"></div>
<div style="position:absolute;left:918.85px;top:840px;width:1.35px;height:14px;background:#e0e0e0;"></div>
<div style="position:absolute;left:920.2px;top:847.1px;width:1.7999999999999772px;height:1.4px;background:#e0e0e0;"></div>
<div style="position:absolute;left:922.0px;top:847.1px;width:15.5px;height:1.4px;background:#e0e0e0;"></div>
<div class="t" style="left:608.3px;top:842px">                                                <span style="color:#3dd89d">UploadAccountResponse.php</span></div>
<div style="position:absolute;left:610.85px;top:854px;width:1.35px;height:14px;background:#e0e0e0;"></div>
<div style="position:absolute;left:638.85px;top:854px;width:1.35px;height:14px;background:#e0e0e0;"></div>
<div style="position:absolute;left:666.85px;top:854px;width:1.35px;height:14px;background:#e0e0e0;"></div>
<div style="position:absolute;left:694.85px;top:854px;width:1.35px;height:14px;background:#e0e0e0;"></div>
<div style="position:absolute;left:806.85px;top:854px;width:1.35px;height:14px;background:#e0e0e0;"></div>
<div style="position:absolute;left:834.85px;top:854px;width:1.35px;height:14px;background:#e0e0e0;"></div>
<div style="position:absolute;left:862.85px;top:854px;width:1.35px;height:14px;background:#e0e0e0;"></div>
<div style="position:absolute;left:890.85px;top:854px;width:1.35px;height:14px;background:#e0e0e0;"></div>
<div style="position:absolute;left:918.85px;top:854px;width:1.35px;height:14px;background:#e0e0e0;"></div>
<div style="position:absolute;left:920.2px;top:861.1px;width:1.7999999999999772px;height:1.4px;background:#e0e0e0;"></div>
<div style="position:absolute;left:922.0px;top:861.1px;width:15.5px;height:1.4px;background:#e0e0e0;"></div>
<div class="t" style="left:608.3px;top:856px">                                                <span style="color:#3dd89d">UserInfo.php</span></div>
<div style="position:absolute;left:610.85px;top:868px;width:1.35px;height:14px;background:#e0e0e0;"></div>
<div style="position:absolute;left:638.85px;top:868px;width:1.35px;height:14px;background:#e0e0e0;"></div>
<div style="position:absolute;left:666.85px;top:868px;width:1.35px;height:14px;background:#e0e0e0;"></div>
<div style="position:absolute;left:694.85px;top:868px;width:1.35px;height:14px;background:#e0e0e0;"></div>
<div style="position:absolute;left:806.85px;top:868px;width:1.35px;height:14px;background:#e0e0e0;"></div>
<div style="position:absolute;left:834.85px;top:868px;width:1.35px;height:14px;background:#e0e0e0;"></div>
<div style="position:absolute;left:862.85px;top:868px;width:1.35px;height:14px;background:#e0e0e0;"></div>
<div style="position:absolute;left:890.85px;top:868px;width:1.35px;height:14px;background:#e0e0e0;"></div>
<div style="position:absolute;left:918.85px;top:868px;width:1.35px;height:14px;background:#e0e0e0;"></div>
<div style="position:absolute;left:920.2px;top:875.1px;width:1.7999999999999772px;height:1.4px;background:#e0e0e0;"></div>
<div style="position:absolute;left:922.0px;top:875.1px;width:15.5px;height:1.4px;background:#e0e0e0;"></div>
<div class="t" style="left:608.3px;top:870px">                                                <span style="color:#3dd89d">UserInfoProviderUserInfo.php</span></div>
<div class="t" style="left:608.3px;top:884px"><span style="color:#efecf2">^C</span></div>
<div class="t" style="left:608.3px;top:898px"><span style="color:#efecf2">root@srv1287524:/#</span></div>
</div>
</body></html>
